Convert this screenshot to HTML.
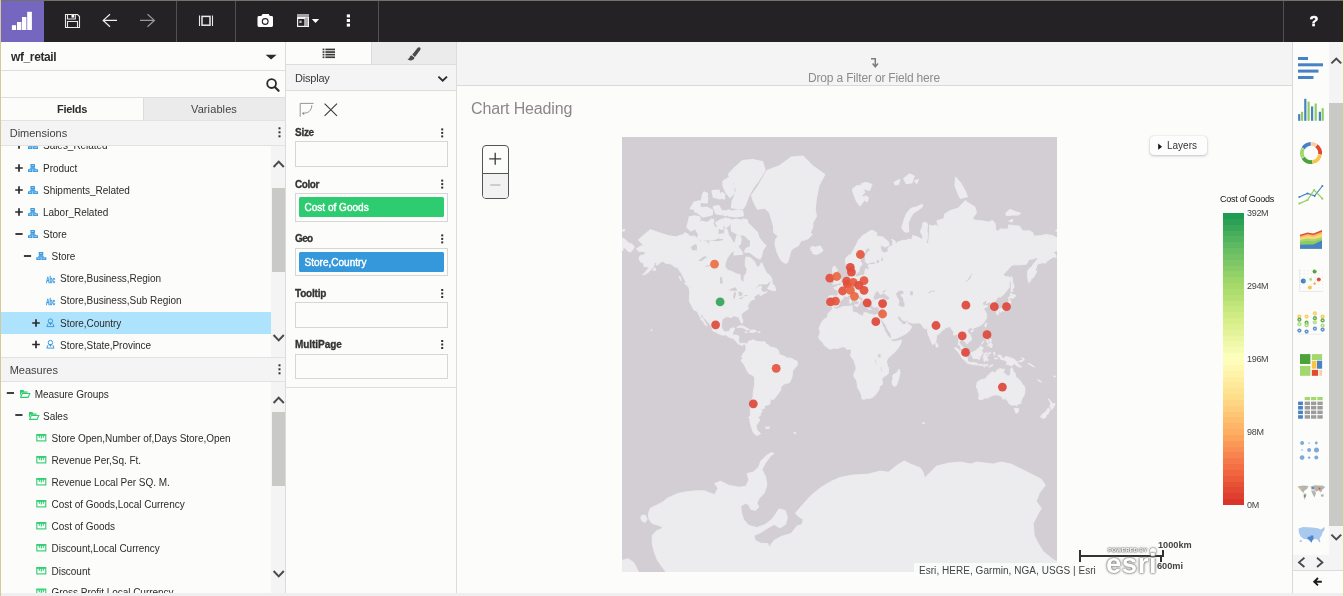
<!DOCTYPE html>
<html>
<head>
<meta charset="utf-8">
<title>wf_retail</title>
<style>
*{box-sizing:border-box;margin:0;padding:0}
html,body{width:1344px;height:596px;overflow:hidden;background:#fcfdfb;font-family:"Liberation Sans",sans-serif;font-size:10.5px;color:#2b2b2b}
.abs{position:absolute}
svg{position:absolute;overflow:visible}
#edgeL{left:0;top:0;width:1px;height:596px;background:#d9c79a}
#edgeR{left:1343px;top:0;width:1px;height:596px;background:#e2d5a9}
#edgeT{left:0;top:0;width:1344px;height:1px;background:#70756b}
#topbar{left:1px;top:1px;width:1342px;height:41px;background:#242225}
#logo{left:0;top:0;width:43px;height:41px;background:#7566c0}
.tdiv{top:0;width:1px;height:41px;background:#525053}
/* left panel */
#left{left:1px;top:42px;width:284px;height:552px;background:#fcfdfb;overflow:hidden}
.hline{left:0;height:1px;background:#dcdfdd}
.t{position:absolute;white-space:nowrap;font-size:10px;letter-spacing:-0.03px;line-height:14px;height:14px}
.row{position:absolute;left:0;width:269px;height:22px}
.row .t{top:4px}
.sechead{position:absolute;left:0;width:284px;height:25px;background:#f4f4f4;border-top:1px solid #e2e2e2;border-bottom:1px solid #e2e2e2}
.sechead span{position:absolute;left:8.7px;top:5px;font-size:11px;color:#424242;letter-spacing:0;line-height:14px}
.vbar{position:absolute;width:15px;background:#f4f4f4}
.thumb{position:absolute;left:1px;width:13px;background:#c9c9c5}
/* middle panel */
#mid{left:285px;top:42px;width:172px;height:552px;background:#fcfdfb;border-left:1px solid #dcdcdc;border-right:1px solid #dcdcdc}
.bucketlbl{position:absolute;left:9px;font-weight:bold;font-size:10px;letter-spacing:-0.2px;color:#333;-webkit-text-stroke:0.3px #333;line-height:14px;height:14px}
.bucket{position:absolute;left:9px;width:153px;height:26px;border:1px solid #d6d6d6;background:#fcfdfb}
.pill{position:absolute;left:3px;top:3px;width:145px;height:20px;color:#fff;font-size:10px;letter-spacing:0.02px;line-height:22px;padding-left:5.5px;-webkit-text-stroke:0.4px #fff;border-radius:1.5px;white-space:nowrap}
/* canvas */
#canvas{left:457px;top:42px;width:835px;height:552px;background:#fcfdfb}
#filter{left:0;top:0;width:835px;height:44px;background:#f4f4f4;border-bottom:1px solid #d9d9d9}
/* right strip */
#strip{left:1292px;top:42px;width:51px;height:552px;background:#fcfdfb;border-left:1px solid #d9d9d9}
#bottom{left:1px;top:593px;width:1342px;height:3px;background:#efefef}
</style>
</head>
<body>
<div id="all" style="position:absolute;left:0;top:0;width:1344px;height:596px;will-change:transform">
<div class="abs" id="topbar">
  <div class="abs" id="logo"></div>
  <svg style="left:0;top:0" width="43" height="41" viewBox="1 1 43 41">
    <rect x="11.9" y="25.2" width="4.2" height="4.8" fill="#fff"/>
    <rect x="17" y="22" width="4.4" height="8" fill="#fff"/>
    <rect x="22" y="17" width="4.4" height="13" fill="#fff"/>
    <rect x="27.2" y="11.8" width="4.7" height="18.2" fill="#fff"/>
  </svg>
  <div class="abs tdiv" style="left:175px"></div>
  <div class="abs tdiv" style="left:234px"></div>
  <div class="abs tdiv" style="left:377px"></div>
  <div class="abs tdiv" style="left:1282px"></div>
  <!-- all toolbar icons drawn in page coordinates -->
  <svg style="left:0;top:0" width="1342" height="41" viewBox="1 1 1342 41" fill="none" stroke-linecap="butt">
    <!-- save -->
    <g stroke="#e9e9e9" stroke-width="1.1">
      <path d="M65.5 14.5H77.5L79.5 16.5V27.5H65.5Z"/>
      <path d="M67.5 14.5V19H75.3V14.5"/>
      <path d="M67.5 27.5V21.5H77.5V27.5"/>
    </g>
    <rect x="71.5" y="15" width="2.6" height="2.6" fill="#fff"/>
    <!-- back arrow -->
    <path d="M117 20.4H103.4M110 14.2L103.2 20.4L110 26.8" stroke="#f0f0f0" stroke-width="1.2"/>
    <!-- forward arrow -->
    <path d="M140 20.4H154.2M147.5 14.2L154.4 20.4L147.5 26.8" stroke="#9b999b" stroke-width="1.2"/>
    <!-- fit icon -->
    <path d="M199.5 15.6V26M212.5 15.6V26" stroke="#e9e9e9" stroke-width="1.1"/>
    <rect x="202" y="16.4" width="8" height="8.8" stroke="#e9e9e9" stroke-width="1.5"/>
    <!-- camera -->
    <path d="M259 16H261.3L262.6 14.1H268.6L269.9 16H271.6Q273 16 273 17.4V25.6Q273 27 271.6 27H258.9Q257.5 27 257.5 25.6V17.4Q257.5 16 259 16Z" fill="#fff"/>
    <circle cx="265.2" cy="21.5" r="2.9" stroke="#242225" stroke-width="1.1" fill="#fff"/>
    <!-- layout icon -->
    <rect x="297" y="14" width="12" height="13" fill="#f2f2f2"/>
    <rect x="297" y="14" width="12" height="3" fill="#a3a3a3"/>
    <rect x="298.2" y="19" width="6.2" height="6.8" fill="#242225"/>
    <rect x="299.4" y="20.6" width="2.2" height="2.4" fill="#bdbdbd"/>
    <rect x="305.1" y="17.6" width="2.8" height="8.4" fill="#a9a9a9"/>
    <path d="M311.8 19H319.2L315.5 23Z" fill="#fff"/>
    <!-- more dots -->
    <rect x="346.8" y="14.4" width="3.2" height="3" fill="#fff"/>
    <rect x="346.8" y="19" width="3.2" height="3" fill="#fff"/>
    <rect x="346.8" y="23.6" width="3.2" height="3" fill="#fff"/>
  </svg>
  <div class="abs" style="left:1307px;top:12px;width:12px;height:16px;color:#fff;font-weight:bold;font-size:14.5px;line-height:16px;text-align:center;-webkit-text-stroke:0.5px #fff">?</div>

</div>

<div class="abs" id="left">
<div class="t" style="left:10px;top:8px;font-weight:bold;font-size:12px;letter-spacing:-0.38px;color:#2b2b2b">wf_retail</div>
<svg style="left:0;top:0" width="284" height="60" viewBox="1 42 284 60"><path d="M265.6 54.8H276.6L271.1 59.5Z" fill="#2b2b2b"/><circle cx="271.6" cy="83.6" r="4.4" fill="none" stroke="#2b2b2b" stroke-width="1.8"/><path d="M274.8 87L278.6 90.8" stroke="#2b2b2b" stroke-width="2.2" stroke-linecap="round"/></svg>
<div class="abs hline" style="top:28px;width:284px"></div>
<div class="abs hline" style="top:55px;width:284px"></div>
<div class="abs" style="left:142px;top:56px;width:142px;height:22px;background:#ebebeb;border-left:1px solid #dcdcdc"></div>
<div class="t" style="left:0;width:142px;text-align:center;top:60px;font-weight:bold;font-size:11px;letter-spacing:-0.3px">Fields</div>
<div class="t" style="left:142px;width:142px;text-align:center;top:60px;font-size:11px;letter-spacing:0.1px;color:#444">Variables</div>
<div class="abs" style="left:0;top:104px;width:270px;height:211px;overflow:hidden"><div class="abs" style="left:0;top:-104px;width:270px;height:600px">
<div class="t" style="left:42.0px;top:97px">Sales_Related</div>
<div class="t" style="left:42.0px;top:120px">Product</div>
<div class="t" style="left:42.0px;top:142px">Shipments_Related</div>
<div class="t" style="left:42.0px;top:164px">Labor_Related</div>
<div class="t" style="left:42.0px;top:186px">Store</div>
<div class="t" style="left:50.5px;top:208px">Store</div>
<div class="t" style="left:59.0px;top:230px">Store,Business,Region</div>
<div class="t" style="left:59.0px;top:252px">Store,Business,Sub Region</div>
<div class="abs" style="left:0;top:270px;width:270px;height:22px;background:#ade3fd"></div>
<div class="t" style="left:59.0px;top:275px">Store,Country</div>
<div class="t" style="left:59.0px;top:297px">Store,State,Province</div>
<svg style="left:0;top:0" width="270" height="560"><path d="M14.2 103.0H21.8M18.0 99.3V106.7" stroke="#2b2b2b" stroke-width="1.7" fill="none"/><g fill="#3b9ae1"><rect x="29.4" y="99.1" width="4.6" height="2.8" rx="0.4"/><path d="M30.0 101.8h3.4l1.7 2.6h-6.8z" fill-opacity="0.85"/><rect x="27.0" y="104.2" width="4.5" height="2.9" rx="0.3"/><rect x="32.1" y="104.2" width="4.9" height="2.9" rx="0.3"/></g><g fill="#a9d6f7"><rect x="30.6" y="100.0" width="2.2" height="0.9"/><rect x="28.2" y="105.2" width="2" height="0.9"/><rect x="33.4" y="105.2" width="2.4" height="0.9"/></g><path d="M14.2 126.0H21.8M18.0 122.3V129.7" stroke="#2b2b2b" stroke-width="1.7" fill="none"/><g fill="#3b9ae1"><rect x="29.4" y="122.1" width="4.6" height="2.8" rx="0.4"/><path d="M30.0 124.8h3.4l1.7 2.6h-6.8z" fill-opacity="0.85"/><rect x="27.0" y="127.2" width="4.5" height="2.9" rx="0.3"/><rect x="32.1" y="127.2" width="4.9" height="2.9" rx="0.3"/></g><g fill="#a9d6f7"><rect x="30.6" y="123.0" width="2.2" height="0.9"/><rect x="28.2" y="128.2" width="2" height="0.9"/><rect x="33.4" y="128.2" width="2.4" height="0.9"/></g><path d="M14.2 148.0H21.8M18.0 144.3V151.7" stroke="#2b2b2b" stroke-width="1.7" fill="none"/><g fill="#3b9ae1"><rect x="29.4" y="144.1" width="4.6" height="2.8" rx="0.4"/><path d="M30.0 146.8h3.4l1.7 2.6h-6.8z" fill-opacity="0.85"/><rect x="27.0" y="149.2" width="4.5" height="2.9" rx="0.3"/><rect x="32.1" y="149.2" width="4.9" height="2.9" rx="0.3"/></g><g fill="#a9d6f7"><rect x="30.6" y="145.0" width="2.2" height="0.9"/><rect x="28.2" y="150.2" width="2" height="0.9"/><rect x="33.4" y="150.2" width="2.4" height="0.9"/></g><path d="M14.2 170.0H21.8M18.0 166.3V173.7" stroke="#2b2b2b" stroke-width="1.7" fill="none"/><g fill="#3b9ae1"><rect x="29.4" y="166.1" width="4.6" height="2.8" rx="0.4"/><path d="M30.0 168.8h3.4l1.7 2.6h-6.8z" fill-opacity="0.85"/><rect x="27.0" y="171.2" width="4.5" height="2.9" rx="0.3"/><rect x="32.1" y="171.2" width="4.9" height="2.9" rx="0.3"/></g><g fill="#a9d6f7"><rect x="30.6" y="167.0" width="2.2" height="0.9"/><rect x="28.2" y="172.2" width="2" height="0.9"/><rect x="33.4" y="172.2" width="2.4" height="0.9"/></g><path d="M14.4 192.0H21.6" stroke="#2b2b2b" stroke-width="1.8" fill="none"/><g fill="#3b9ae1"><rect x="29.4" y="188.1" width="4.6" height="2.8" rx="0.4"/><path d="M30.0 190.8h3.4l1.7 2.6h-6.8z" fill-opacity="0.85"/><rect x="27.0" y="193.2" width="4.5" height="2.9" rx="0.3"/><rect x="32.1" y="193.2" width="4.9" height="2.9" rx="0.3"/></g><g fill="#a9d6f7"><rect x="30.6" y="189.0" width="2.2" height="0.9"/><rect x="28.2" y="194.2" width="2" height="0.9"/><rect x="33.4" y="194.2" width="2.4" height="0.9"/></g><path d="M22.9 214.0H30.1" stroke="#2b2b2b" stroke-width="1.8" fill="none"/><g fill="#3b9ae1"><rect x="37.7" y="210.1" width="4.6" height="2.8" rx="0.4"/><path d="M38.3 212.8h3.4l1.7 2.6h-6.8z" fill-opacity="0.85"/><rect x="35.3" y="215.2" width="4.5" height="2.9" rx="0.3"/><rect x="40.4" y="215.2" width="4.9" height="2.9" rx="0.3"/></g><g fill="#a9d6f7"><rect x="38.9" y="211.0" width="2.2" height="0.9"/><rect x="36.5" y="216.2" width="2" height="0.9"/><rect x="41.7" y="216.2" width="2.4" height="0.9"/></g><text x="45.0" y="241.0" font-size="9.6" font-weight="bold" fill="#3b9ae1" stroke="#3b9ae1" stroke-width="0.35" textLength="9.2" lengthAdjust="spacingAndGlyphs" font-family="Liberation Sans, sans-serif">Abc</text><text x="45.0" y="263.0" font-size="9.6" font-weight="bold" fill="#3b9ae1" stroke="#3b9ae1" stroke-width="0.35" textLength="9.2" lengthAdjust="spacingAndGlyphs" font-family="Liberation Sans, sans-serif">Abc</text><path d="M31.2 281.0H38.8M35.0 277.3V284.7" stroke="#2b2b2b" stroke-width="1.7" fill="none"/><circle cx="49.4" cy="279.1" r="2.2" fill="none" stroke="#3b9ae1" stroke-width="1"/><path d="M47.5 280.4L49.4 283.4L51.3 280.4" fill="#3b9ae1"/><path d="M47.0 281.6L45.8 284.6H53.0L51.8 281.6" fill="none" stroke="#3b9ae1" stroke-width="1"/><path d="M31.2 302.5H38.8M35.0 298.8V306.2" stroke="#2b2b2b" stroke-width="1.7" fill="none"/><circle cx="49.4" cy="300.6" r="2.2" fill="none" stroke="#3b9ae1" stroke-width="1"/><path d="M47.5 301.9L49.4 304.9L51.3 301.9" fill="#3b9ae1"/><path d="M47.0 303.1L45.8 306.1H53.0L51.8 303.1" fill="none" stroke="#3b9ae1" stroke-width="1"/></svg>
</div></div>
<div class="abs" style="left:0;top:340px;width:270px;height:212px;overflow:hidden"><div class="abs" style="left:0;top:-340px;width:270px;height:600px">
<div class="t" style="left:33.7px;top:346px">Measure Groups</div>
<div class="t" style="left:42.0px;top:368px">Sales</div>
<div class="t" style="left:50.5px;top:390px">Store Open,Number of,Days Store,Open</div>
<div class="t" style="left:50.5px;top:412px">Revenue Per,Sq. Ft.</div>
<div class="t" style="left:50.5px;top:434px">Revenue Local Per SQ. M.</div>
<div class="t" style="left:50.5px;top:456px">Cost of Goods,Local Currency</div>
<div class="t" style="left:50.5px;top:478px">Cost of Goods</div>
<div class="t" style="left:50.5px;top:500px">Discount,Local Currency</div>
<div class="t" style="left:50.5px;top:523px">Discount</div>
<div class="t" style="left:50.5px;top:544px">Gross Profit,Local Currency</div>
<svg style="left:0;top:0" width="270" height="560"><path d="M5.8 351.0H13.0" stroke="#2b2b2b" stroke-width="1.8" fill="none"/><path d="M19.0 348.1h3.4l1 1.3h3.2v1.4h-6.2l-1.4 3.6z" fill="#2ecc71"/><path d="M21.2 351.5h7.6l-1.7 3.9h-7.4z" fill="none" stroke="#2ecc71" stroke-width="1.1"/><path d="M14.3 373.0H21.5" stroke="#2b2b2b" stroke-width="1.8" fill="none"/><path d="M28.0 370.1h3.4l1 1.3h3.2v1.4h-6.2l-1.4 3.6z" fill="#2ecc71"/><path d="M30.2 373.5h7.6l-1.7 3.9h-7.4z" fill="none" stroke="#2ecc71" stroke-width="1.1"/><rect x="35.8" y="392.6" width="9" height="6.3" fill="none" stroke="#2ecc71" stroke-width="1.1"/><path d="M35.8 393.3h9M38.3 393.1v2.6M40.3 393.1v3.4M42.3 393.1v2.6" stroke="#2ecc71" stroke-width="1.1" fill="none"/><rect x="35.8" y="414.6" width="9" height="6.3" fill="none" stroke="#2ecc71" stroke-width="1.1"/><path d="M35.8 415.3h9M38.3 415.1v2.6M40.3 415.1v3.4M42.3 415.1v2.6" stroke="#2ecc71" stroke-width="1.1" fill="none"/><rect x="35.8" y="436.6" width="9" height="6.3" fill="none" stroke="#2ecc71" stroke-width="1.1"/><path d="M35.8 437.3h9M38.3 437.1v2.6M40.3 437.1v3.4M42.3 437.1v2.6" stroke="#2ecc71" stroke-width="1.1" fill="none"/><rect x="35.8" y="458.6" width="9" height="6.3" fill="none" stroke="#2ecc71" stroke-width="1.1"/><path d="M35.8 459.3h9M38.3 459.1v2.6M40.3 459.1v3.4M42.3 459.1v2.6" stroke="#2ecc71" stroke-width="1.1" fill="none"/><rect x="35.8" y="480.6" width="9" height="6.3" fill="none" stroke="#2ecc71" stroke-width="1.1"/><path d="M35.8 481.3h9M38.3 481.1v2.6M40.3 481.1v3.4M42.3 481.1v2.6" stroke="#2ecc71" stroke-width="1.1" fill="none"/><rect x="35.8" y="502.6" width="9" height="6.3" fill="none" stroke="#2ecc71" stroke-width="1.1"/><path d="M35.8 503.3h9M38.3 503.1v2.6M40.3 503.1v3.4M42.3 503.1v2.6" stroke="#2ecc71" stroke-width="1.1" fill="none"/><rect x="35.8" y="525.6" width="9" height="6.3" fill="none" stroke="#2ecc71" stroke-width="1.1"/><path d="M35.8 526.3h9M38.3 526.1v2.6M40.3 526.1v3.4M42.3 526.1v2.6" stroke="#2ecc71" stroke-width="1.1" fill="none"/><rect x="35.8" y="547.1" width="9" height="6.3" fill="none" stroke="#2ecc71" stroke-width="1.1"/><path d="M35.8 547.8h9M38.3 547.6v2.6M40.3 547.6v3.4M42.3 547.6v2.6" stroke="#2ecc71" stroke-width="1.1" fill="none"/></svg>
</div></div>
<div class="sechead" style="top:78px;height:26px"><span>Dimensions</span><svg style="left:276.6px;top:6px" width="3" height="11"><rect x="0.5" y="0.3" width="2" height="2" fill="#333"/><rect x="0.5" y="4.3" width="2" height="2" fill="#333"/><rect x="0.5" y="8.3" width="2" height="2" fill="#333"/></svg></div>
<div class="sechead" style="top:315px"><span>Measures</span><svg style="left:276.6px;top:6px" width="3" height="11"><rect x="0.5" y="0.3" width="2" height="2" fill="#333"/><rect x="0.5" y="4.3" width="2" height="2" fill="#333"/><rect x="0.5" y="8.3" width="2" height="2" fill="#333"/></svg></div>
<div class="vbar" style="left:270px;top:104px;height:211px"><div class="thumb" style="top:42px;height:84px"></div><svg style="left:0;top:0" width="15" height="211"><path d="M2.6 21.0L7.7 15.6L12.8 21.0" fill="none" stroke="#4a4a4a" stroke-width="2"/><path d="M2.6 189.0L7.7 194.4L12.8 189.0" fill="none" stroke="#4a4a4a" stroke-width="2"/></svg></div>
<div class="vbar" style="left:270px;top:340px;height:212px"><div class="thumb" style="top:30px;height:74px"></div><svg style="left:0;top:0" width="15" height="212"><path d="M2.6 21.0L7.7 15.6L12.8 21.0" fill="none" stroke="#4a4a4a" stroke-width="2"/><path d="M2.6 189.0L7.7 194.4L12.8 189.0" fill="none" stroke="#4a4a4a" stroke-width="2"/></svg></div>

</div>

<div class="abs" id="mid">
  <!-- coords: abs - (286,42) inside border box (border-left 1px at x=285) -->
  <div class="abs" style="left:85px;top:0;width:85px;height:22px;background:#ebebeb;border-left:1px solid #dcdcdc"></div>
  <div class="abs hline" style="top:22px;width:170px;background:#dcdcdc"></div>
  <div class="abs" style="left:0;top:23px;width:170px;height:25px;background:#f4f4f4"></div>
  <div class="abs hline" style="top:48px;width:170px;background:#dcdcdc"></div>
  <div class="t" style="left:9px;top:29px;font-size:11px;letter-spacing:-0.2px;color:#3a3a3a">Display</div>
  <svg style="left:0;top:0" width="170" height="552" viewBox="286 42 170 552" fill="none">
    <!-- list icon -->
    <g fill="#3a3a3a">
      <rect x="322.6" y="48.6" width="1.8" height="1.7"/><rect x="325.4" y="48.6" width="9.6" height="1.7"/>
      <rect x="322.6" y="51.2" width="1.8" height="1.7"/><rect x="325.4" y="51.2" width="9.6" height="1.7"/>
      <rect x="322.6" y="53.8" width="1.8" height="1.7"/><rect x="325.4" y="53.8" width="9.6" height="1.7"/>
      <rect x="322.6" y="56.4" width="1.8" height="1.7"/><rect x="325.4" y="56.4" width="9.6" height="1.7"/>
    </g>
    <!-- brush -->
    <path d="M419.4 47.3C420.7 47.7 420.9 49.1 420.2 50.1L415 57L412.2 54.8L417.5 47.9C417.9 47.3 418.7 47.1 419.4 47.3Z" fill="#4a4a4a"/>
    <path d="M411.6 55.4L414.4 57.6C414.4 59.4 412.6 60.6 410.6 60.4C409.2 60.3 408 59.7 407.5 58.9C409.2 58.8 409.5 57.9 409.7 57C409.9 56 410.7 55.4 411.6 55.4Z" fill="#4a4a4a"/>
    <!-- chevron down -->
    <path d="M438.4 76.6L442.7 80.6L447 76.6" stroke="#2b2b2b" stroke-width="1.9"/>
    <!-- swap icon -->
    <path d="M300.2 116.8V103.4H313.6" stroke="#8a8a8a" stroke-width="0.9"/>
    <path d="M311.8 105.2C311.6 110.6 308.6 113.2 302.6 113.4M302.4 113.4L304.4 112.2M302.4 113.4L304.2 114.8" stroke="#8a8a8a" stroke-width="0.9"/>
    <!-- X icon -->
    <path d="M324.6 103.6L337 115.8M337 103.6L324.6 115.8" stroke="#3a3a3a" stroke-width="1.1"/>
  </svg>
  <div class="bucketlbl" style="top:84px;letter-spacing:-0.28px">Size</div>
  <div class="bucket" style="top:99px"></div>
  <div class="bucketlbl" style="top:136px;letter-spacing:-0.46px">Color</div>
  <div class="bucket" style="top:151px;height:29px"><div class="pill" style="background:#2ecc71">Cost of Goods</div></div>
  <div class="bucketlbl" style="top:190px;letter-spacing:-0.65px">Geo</div>
  <div class="bucket" style="top:206px;height:28px"><div class="pill" style="background:#3498db">Store,Country</div></div>
  <div class="bucketlbl" style="top:245px;letter-spacing:-0.21px">Tooltip</div>
  <div class="bucket" style="top:260px"></div>
  <div class="bucketlbl" style="top:296px;letter-spacing:-0.06px">MultiPage</div>
  <div class="bucket" style="top:312px;height:25px"></div>
  <div class="abs hline" style="top:345px;width:170px;background:#dcdcdc"></div>
  <svg style="left:0;top:0" width="170" height="400" viewBox="286 42 170 400">
    <g fill="#333">
      <rect x="441.2" y="128.4" width="2" height="2"/><rect x="441.2" y="131.9" width="2" height="2"/><rect x="441.2" y="135.4" width="2" height="2"/>
      <rect x="441.2" y="179.6" width="2" height="2"/><rect x="441.2" y="183.1" width="2" height="2"/><rect x="441.2" y="186.6" width="2" height="2"/>
      <rect x="441.2" y="234.4" width="2" height="2"/><rect x="441.2" y="237.9" width="2" height="2"/><rect x="441.2" y="241.4" width="2" height="2"/>
      <rect x="441.2" y="289" width="2" height="2"/><rect x="441.2" y="292.5" width="2" height="2"/><rect x="441.2" y="296" width="2" height="2"/>
      <rect x="441.2" y="340" width="2" height="2"/><rect x="441.2" y="343.5" width="2" height="2"/><rect x="441.2" y="347" width="2" height="2"/>
    </g>
  </svg>

</div>

<div class="abs" id="canvas">
<div class="abs" id="filter"></div>
<svg style="left:0;top:0" width="835" height="44" viewBox="457 42 835 44"><path d="M871 58.8H875.3V65.6M872.6 63.6L875.3 66.8L878 63.6" fill="none" stroke="#7d7d7d" stroke-width="1.5"/></svg>
<div class="t" style="left:347px;top:29px;width:140px;text-align:center;font-size:12px;letter-spacing:-0.18px;color:#8c8c8c;line-height:14px">Drop a Filter or Field here</div>
<div class="t" style="left:14px;top:57px;font-size:16px;letter-spacing:-0.15px;color:#8c858c;line-height:20px;height:20px">Chart Heading</div>
<div class="abs" style="left:25px;top:103px;width:27px;height:54px;border:1px solid #515757;border-radius:4px;background:#fcfdfb;overflow:hidden"><div class="abs" style="left:0;top:27px;width:25px;height:25px;background:#f2f2f2;border-top:1px solid #515757"></div></div>
<svg style="left:0;top:0" width="100" height="200" viewBox="457 42 100 200"><path d="M489.2 158.8H501.2M495.2 152.8V164.8" stroke="#3a3a3a" stroke-width="1.3" fill="none"/><path d="M490.2 185H500.4" stroke="#b9b9b9" stroke-width="1.3"/></svg>
<svg style="left:165px;top:95px;overflow:hidden" width="435" height="435" viewBox="0 0 435 435"><rect width="435" height="435" fill="#d3ced4"/><path fill="#ecebed" stroke="#ecebed" stroke-width="0.9" stroke-linejoin="round" d="M14.5,111.5L19.3,108.8L21.8,109.7L19.9,106.6L16.3,103.1L20.5,99.1L28.4,92.6L33.8,94.5L38.7,96.3L47.1,98.8L54.4,99.8L56.8,98.8L61.6,97.4L62.8,95.6L66.5,97.4L67.7,99.4L72.5,99.1L78.5,104.7L84.6,104.4L87.0,107.9L87.6,104.1L94.2,104.7L99.1,104.1L101.5,103.1L101.5,99.1L103.3,90.3L105.7,93.7L106.3,97.4L108.8,100.8L111.2,105.7L113.0,105.7L114.8,98.1L118.4,99.1L119.3,102.5L118.4,107.3L116.0,109.4L113.6,110.3L113.0,108.8L112.4,113.2L108.8,116.0L105.1,121.3L103.3,126.3L103.0,129.4L105.7,133.3L110.0,134.4L114.8,137.0L118.1,137.6L118.4,141.7L120.2,145.1L122.0,144.7L122.0,139.7L124.5,135.5L125.1,132.1L123.2,128.7L123.2,123.9L123.9,120.0L128.1,120.6L131.7,123.9L133.5,126.3L134.1,129.2L136.5,130.3L138.4,127.5L139.6,125.6L142.6,132.1L145.0,136.5L148.0,138.6L149.8,141.7L150.2,143.7L146.8,145.1L145.0,147.0L140.2,147.0L137.1,147.2L134.7,149.4L132.3,152.5L135.3,150.3L139.0,149.0L139.8,149.8L139.0,151.6L139.2,153.9L140.8,154.9L143.2,155.4L145.0,154.2L144.6,155.3L140.8,157.2L138.4,158.8L137.5,157.8L139.6,156.0L136.5,156.8L134.1,158.2L132.3,159.3L132.1,161.2L132.9,161.8L131.1,162.5L128.1,163.7L127.8,165.5L126.3,167.0L125.7,169.3L126.3,171.9L124.5,173.0L122.0,174.8L119.6,176.7L119.3,178.8L120.2,182.2L120.8,183.9L120.4,186.0L119.4,186.0L118.4,184.3L117.5,182.2L116.6,179.5L114.8,179.9L113.0,178.9L111.2,179.1L109.4,180.6L108.1,180.6L106.9,180.0L104.5,179.7L102.7,180.6L100.3,182.2L99.9,184.9L99.3,189.6L101.1,193.7L103.3,195.0L106.3,194.5L107.9,193.5L108.3,191.5L111.2,190.9L112.6,191.1L111.8,193.5L110.8,195.4L110.6,197.9L110.3,198.2L113.6,198.0L117.0,199.2L116.6,202.3L116.4,204.1L117.2,205.4L118.4,206.6L120.8,206.3L122.0,206.0L123.9,206.9L124.1,207.8L122.6,207.2L121.4,206.8L120.5,208.7L119.0,208.0L117.2,207.4L114.8,205.4L113.8,204.1L111.8,201.7L108.8,200.8L106.3,199.8L103.9,197.7L100.9,198.3L96.9,196.9L94.2,195.4L90.6,193.5L90.0,192.2L90.3,190.9L88.8,188.5L87.0,186.3L85.2,184.0L84.0,182.4L81.9,180.9L81.0,178.1L78.9,177.1L78.9,179.5L81.0,181.5L82.2,183.6L83.4,185.6L84.2,187.3L85.2,188.7L84.3,188.9L82.2,186.6L81.9,184.9L79.8,183.3L78.5,182.5L79.4,181.1L77.6,179.2L76.1,175.9L74.3,173.8L71.9,173.0L70.2,169.9L69.5,168.1L67.9,165.5L67.3,164.0L67.4,161.5L67.7,157.3L67.7,154.2L66.8,150.5L68.9,150.9L69.5,152.1L69.5,149.8L68.6,149.0L67.1,147.5L64.0,145.6L62.8,142.7L60.4,138.6L59.8,136.5L58.0,134.4L55.6,130.6L52.6,129.9L50.8,128.2L48.3,126.8L43.5,126.3L41.1,124.4L38.7,125.1L36.2,127.5L34.1,128.2L35.0,123.9L32.6,126.3L31.4,129.9L28.4,133.3L26.0,135.5L23.0,137.2L20.5,138.0L23.0,135.5L26.0,132.1L27.2,129.4L25.4,129.9L21.8,129.4L21.8,126.3L18.7,125.1L16.9,122.1L18.1,118.7L20.5,118.2L23.0,117.4L23.0,114.6L20.5,114.6L16.3,114.3ZM129.3,58.6L136.5,48.1L145.0,33.3L157.1,28.8L169.2,20.0L181.2,18.9L190.9,28.8L203.0,37.5L197.0,48.8L194.5,61.5L193.3,72.3L194.5,79.4L190.9,85.9L190.9,89.9L188.5,95.6L190.3,97.4L186.1,101.8L178.8,104.1L176.4,108.8L171.6,111.2L169.2,113.2L168.0,117.4L165.5,125.8L163.1,126.3L159.5,123.9L157.1,120.0L155.3,116.0L154.1,111.8L152.9,107.3L153.5,102.5L155.9,99.1L151.6,95.6L151.6,89.9L149.8,83.8L147.4,75.7L142.6,71.3L135.3,72.3L131.7,65.5ZM143.2,108.8L140.2,113.2L139.0,118.7L137.8,121.3L134.7,120.0L130.5,116.6L127.5,114.6L123.2,114.6L124.5,111.8L128.7,110.3L129.3,103.5L125.7,100.8L122.6,97.4L118.4,97.4L113.6,95.6L110.0,93.7L109.4,83.8L114.8,82.5L119.6,83.8L123.2,86.7L126.9,87.9L131.7,92.6L135.3,96.3L136.5,100.8L140.2,105.7ZM95.5,100.8L90.6,102.5L84.6,102.1L79.8,103.1L76.1,100.8L77.3,97.4L74.9,93.7L73.7,91.5L76.1,86.7L79.8,84.7L84.6,85.9L89.4,83.8L91.8,89.9L95.5,91.9L95.5,97.4ZM65.5,89.9L68.9,93.4L71.3,92.2L73.1,87.9L76.1,84.2L77.9,82.5L77.3,80.3L72.5,79.4L67.7,80.3L67.1,83.8ZM110.0,70.3L120.8,71.3L123.2,67.1L126.3,58.6L130.5,50.9L136.5,43.0L142.6,33.3L140.2,25.0L130.5,23.1L120.8,24.0L112.4,31.6L106.9,37.5L112.4,45.3L114.8,53.5L112.4,60.4L110.6,64.4ZM101.5,44.5L107.5,40.7L111.2,48.8L111.8,55.5L108.1,59.8L104.5,55.5L101.5,48.8ZM120.8,78.5L113.6,79.4L106.9,78.5L106.3,73.3L110.0,74.8L116.0,73.3L120.2,74.3ZM108.1,82.5L102.7,81.6L102.1,85.9L103.9,89.9L106.9,87.9ZM100.3,82.5L94.2,85.9L96.7,90.7L100.3,91.9L100.9,86.7ZM90.0,73.3L84.6,70.8L76.1,71.3L76.1,75.7L81.0,79.4L87.0,78.1L90.0,77.1ZM99.7,74.8L96.7,69.2L91.8,69.8L94.2,76.2L99.1,77.1ZM77.9,72.3L68.9,71.3L72.5,65.5L77.3,64.4ZM97.9,61.5L91.8,59.8L90.6,54.2L96.7,53.5ZM120.2,116.6L112.4,117.4L113.0,111.8L116.0,110.3L119.0,114.6ZM102.1,100.8L97.9,100.8L97.3,98.1L100.9,97.4ZM145.8,151.9L150.1,153.4L153.5,153.7L153.8,151.9L152.9,150.3L152.9,148.8L150.4,147.5L150.4,144.7L148.6,145.6L147.4,148.5L145.8,150.7ZM68.3,150.5L66.5,149.9L62.5,146.2L64.0,146.0L66.5,147.5L68.3,149.6ZM59.2,143.7L56.8,139.7L58.2,139.7L58.6,141.7ZM33.8,133.3L30.8,133.3L32.6,130.3ZM114.8,190.4L117.8,188.9L120.8,188.9L124.5,190.9L127.8,192.6L123.9,193.0L122.6,191.5L119.0,190.2L116.0,190.5ZM127.6,194.6L129.3,193.0L132.9,193.1L134.8,194.6L132.3,195.0L130.9,195.6L127.6,195.1ZM122.9,194.9L125.3,195.1L125.1,195.6L123.0,195.5ZM136.3,194.7L138.2,194.9L138.0,195.5L136.3,195.4ZM188.1,111.8L190.3,109.1L193.3,110.3L198.2,108.8L200.0,111.8L201.1,113.2L199.4,115.2L194.5,117.6L190.3,116.6L191.2,114.3L188.5,113.5L190.9,112.3ZM123.9,207.2L125.7,206.2L126.3,204.7L127.1,204.0L129.3,203.5L130.9,202.4L131.3,204.1L132.9,203.5L132.7,202.8L134.7,204.5L137.8,204.6L140.2,205.1L142.6,204.5L143.8,206.0L144.0,207.2L146.2,207.8L148.0,209.9L151.0,210.4L154.7,211.6L155.9,212.7L157.1,215.3L157.1,217.5L158.9,218.1L160.1,218.3L163.7,219.9L164.3,220.9L167.4,221.0L170.4,221.7L172.4,223.3L174.8,223.9L175.4,226.2L175.2,228.4L172.8,230.9L171.0,233.3L170.4,235.8L170.1,239.4L169.2,242.2L168.0,244.8L166.8,246.1L163.7,246.3L161.3,247.7L158.9,249.8L158.8,252.8L157.1,255.5L154.7,258.6L152.9,261.2L151.0,262.6L148.0,262.0L146.9,261.2L148.4,264.2L147.8,267.2L142.6,268.8L142.2,271.6L139.0,271.9L140.2,274.3L138.6,276.0L138.4,278.5L135.9,280.2L138.0,282.9L135.7,286.5L134.1,288.4L134.8,291.9L135.0,292.9L138.7,296.8L136.5,297.8L134.1,298.5L132.3,296.6L130.7,294.5L129.8,291.3L128.6,287.5L127.8,283.8L128.1,281.6L126.6,281.1L128.3,278.5L129.3,273.5L128.1,275.7L128.3,273.2L128.7,269.5L128.6,266.0L129.9,263.4L131.1,259.8L131.1,255.5L132.3,249.4L132.6,246.1L132.7,242.2L132.4,240.0L130.5,238.3L126.9,236.5L125.3,234.3L124.2,232.1L122.3,227.8L121.0,225.7L119.4,224.8L119.3,222.9L120.8,221.5L120.5,220.5L119.6,220.2L119.9,218.7L120.8,217.5L120.8,216.5L122.3,215.7L122.6,214.5L124.1,212.9L123.9,210.2L124.1,209.0L123.4,208.8ZM143.8,289.9L147.7,290.1L146.8,291.7L143.8,291.5ZM210.4,171.1L211.1,171.0L215.1,172.2L217.5,171.1L221.1,169.5L226.0,169.3L229.6,168.9L230.8,169.3L229.9,170.1L230.6,173.0L229.6,174.1L231.4,174.9L233.2,175.4L236.0,176.2L236.2,177.4L238.6,178.2L240.5,179.1L241.7,178.1L241.7,175.9L244.1,175.4L245.9,176.4L247.7,177.1L250.7,177.8L252.5,178.2L254.4,177.4L256.5,177.6L256.8,179.6L258.0,182.5L259.2,184.9L260.4,187.6L260.6,188.9L262.2,191.5L262.6,194.1L264.0,195.4L265.2,198.5L267.0,199.8L269.1,201.9L269.8,203.4L270.7,204.7L273.1,204.4L276.7,203.8L279.4,203.0L279.1,204.9L278.3,207.2L276.7,210.2L275.5,212.1L273.1,214.7L270.1,217.5L267.6,219.7L266.1,221.1L265.2,222.9L264.4,225.4L265.2,226.0L265.0,227.8L265.6,229.6L266.4,230.3L266.6,235.2L266.4,236.5L264.6,238.1L262.2,239.4L261.0,240.8L259.7,241.9L260.4,244.8L260.4,247.4L257.4,249.4L257.3,251.4L256.6,253.7L255.0,255.5L253.8,257.4L251.9,259.5L250.1,260.6L248.6,261.2L244.7,261.4L241.7,262.4L239.9,261.7L239.6,259.4L239.5,257.9L238.0,254.8L237.4,253.6L235.6,250.7L235.0,246.1L235.0,244.8L233.7,242.2L231.8,239.6L231.8,237.7L232.4,235.8L233.8,232.7L234.2,230.9L233.4,228.4L232.4,224.8L231.8,222.9L230.2,221.1L228.4,218.7L228.7,216.9L229.3,216.0L229.1,214.5L229.3,213.3L228.3,212.1L226.0,212.2L224.8,212.3L223.5,210.8L222.7,209.9L220.5,209.9L218.7,210.4L216.3,211.3L215.1,211.7L213.3,211.3L211.5,211.3L208.4,212.2L206.6,211.5L204.4,209.6L202.4,208.4L201.4,206.6L199.7,204.4L199.4,204.1L198.2,202.9L197.2,202.3L197.2,201.0L196.4,199.5L197.6,197.9L198.2,195.4L197.8,193.7L197.0,191.5L198.2,188.3L199.6,185.6L200.1,184.5L201.8,182.6L204.2,181.1L205.4,180.2L205.8,178.8L205.7,177.4L206.4,175.9L208.4,174.4L209.9,172.6ZM277.1,232.1L278.2,236.5L277.7,237.1L277.3,239.6L276.1,243.5L274.5,248.4L272.1,249.4L270.7,248.0L269.8,244.8L271.0,242.2L270.7,239.0L271.9,237.1L274.3,236.2L275.5,234.6L276.5,232.7ZM206.6,169.3L206.0,166.7L206.9,163.1L206.3,159.8L207.8,158.7L210.9,158.8L213.3,159.0L215.3,159.2L216.1,157.2L216.2,154.8L214.8,152.8L212.1,151.6L211.7,150.5L213.9,149.8L215.6,150.1L215.3,148.1L216.1,148.6L217.7,148.5L219.3,147.3L219.4,145.8L221.4,144.9L222.3,143.7L223.2,141.9L224.1,141.1L226.0,140.9L227.4,140.5L227.9,139.7L228.3,138.8L227.5,137.6L227.3,136.3L227.3,133.9L227.9,133.0L230.2,131.7L229.9,133.7L230.6,134.8L229.6,137.0L229.1,138.0L229.6,138.8L230.8,139.7L232.0,139.3L233.8,138.8L234.8,139.9L237.2,139.1L239.9,138.2L241.3,138.8L241.7,137.8L242.9,137.0L242.9,133.7L243.6,132.1L244.8,131.7L245.5,133.3L246.7,133.0L247.0,130.3L245.9,129.2L245.9,128.2L247.7,127.5L251.3,127.5L254.0,126.6L252.3,125.1L250.1,125.1L247.7,125.8L245.2,126.6L243.2,124.6L243.4,121.6L243.1,119.3L244.7,116.8L247.1,113.8L248.2,112.9L247.1,110.9L244.3,111.5L243.2,114.6L242.3,116.8L239.9,119.0L238.4,121.3L238.3,124.6L240.1,126.3L240.1,127.8L238.0,129.4L237.4,132.1L236.8,135.0L235.0,135.5L234.7,136.7L233.1,136.7L232.7,135.2L232.6,133.5L231.8,131.7L231.0,128.7L230.4,126.8L229.3,128.7L227.8,130.6L226.0,131.0L224.4,129.2L223.5,125.6L223.5,121.9L224.8,119.8L227.8,117.4L230.1,117.4L229.6,115.5L231.4,113.2L233.2,109.7L235.0,106.3L236.2,103.5L238.6,100.8L240.5,98.4L243.5,97.0L245.9,95.2L248.7,93.4L251.3,93.7L255.0,95.9L253.8,98.4L257.4,99.4L261.0,100.1L266.4,104.7L267.3,108.2L263.4,110.0L258.0,107.9L259.6,114.6L262.8,116.0L266.4,114.3L265.8,110.9L268.6,109.1L270.7,108.8L270.7,104.1L269.8,102.1L273.1,104.1L273.7,107.9L275.5,105.1L281.5,103.1L283.4,103.5L287.0,102.1L290.0,102.5L290.6,98.4L295.4,99.8L297.2,100.8L298.5,101.5L300.9,102.5L300.3,98.4L298.2,94.5L300.3,89.9L300.9,85.9L303.9,85.1L305.5,87.1L305.1,93.7L305.7,99.1L304.5,105.7L306.3,107.3L306.9,102.5L307.5,93.7L307.5,87.9L309.9,89.1L311.8,88.7L314.2,87.9L317.2,91.9L314.8,83.8L322.0,81.6L322.6,77.1L328.7,73.3L335.9,71.3L343.5,63.3L345.6,65.5L352.8,69.8L354.6,75.7L350.4,81.6L352.8,83.0L355.2,83.4L360.1,83.8L366.7,85.1L370.4,83.4L373.4,86.7L373.4,91.9L375.8,94.5L378.2,91.9L383.0,92.2L386.1,91.9L386.7,87.9L392.7,88.7L397.5,89.1L399.4,92.2L401.8,94.1L407.2,93.7L410.8,95.6L412.0,99.1L416.3,98.8L419.9,98.4L423.5,97.4L430.2,98.4L435.0,100.8L438.6,102.8L441.0,105.7L445.3,107.3L447.4,110.0L446.5,111.8L444.1,114.6L443.5,115.2L440.4,113.8L439.2,111.8L436.2,110.3L436.2,113.2L435.0,113.5L433.2,114.3L431.7,115.2L433.8,118.2L434.2,120.3L431.4,120.0L428.4,121.9L425.3,123.9L423.3,126.3L420.5,125.6L418.1,126.6L416.3,126.6L414.8,128.7L414.5,131.0L413.2,131.7L414.7,135.0L413.2,137.6L410.8,141.3L409.0,141.7L408.7,143.7L406.8,145.6L406.0,142.7L405.4,137.6L405.8,133.7L407.2,131.5L409.6,129.9L412.0,126.3L415.1,122.6L415.7,120.0L411.4,121.9L407.2,122.4L404.2,127.3L400.0,127.5L396.9,128.0L392.7,127.8L389.7,128.2L387.3,131.0L384.2,134.4L380.9,138.0L383.4,139.3L384.0,140.3L386.1,139.3L388.2,141.1L388.1,143.3L387.3,145.6L387.3,150.3L384.9,153.4L381.8,157.3L378.4,160.2L376.9,159.7L375.4,161.0L374.2,162.3L374.2,163.4L371.6,165.0L372.8,167.0L373.9,169.3L373.9,171.6L373.1,172.2L371.6,172.7L370.1,173.0L370.4,171.1L370.7,169.3L369.8,168.1L368.5,167.0L368.9,165.5L367.8,164.7L364.3,166.6L364.9,163.7L363.7,163.3L361.9,165.0L360.1,165.9L361.1,167.5L361.3,168.9L363.5,168.1L365.5,168.7L365.5,169.5L362.9,170.8L361.7,172.3L362.9,173.5L363.6,175.5L364.8,177.1L364.8,178.2L363.1,179.1L364.9,179.6L364.4,181.8L363.1,183.6L362.0,185.6L360.3,187.0L358.5,188.5L355.6,189.7L354.6,190.0L352.6,190.8L351.0,191.3L350.8,192.4L350.2,191.0L348.4,190.8L346.6,191.8L345.3,193.9L346.2,195.8L348.2,197.8L349.4,200.7L349.6,202.9L348.0,204.4L346.8,204.9L346.4,205.7L344.4,207.1L344.1,205.4L342.6,204.6L341.4,202.9L339.5,202.0L339.4,201.2L338.3,201.3L338.3,203.5L337.4,205.0L337.5,206.3L338.7,207.4L339.1,208.8L340.4,209.4L341.4,210.2L342.3,211.7L342.6,213.9L343.4,215.8L342.6,215.9L341.1,214.8L339.9,213.9L338.8,211.0L338.6,209.6L337.9,208.7L336.3,208.0L336.3,206.0L336.8,204.1L336.6,202.3L335.9,200.0L335.4,197.3L333.9,197.2L332.7,198.2L331.4,197.9L331.7,195.4L330.8,193.5L329.0,191.5L328.4,189.7L326.9,189.8L325.0,190.5L322.6,190.9L322.4,192.2L320.4,193.3L319.0,194.7L316.9,196.9L315.4,198.0L314.4,198.8L314.4,201.4L313.9,203.5L313.9,205.0L313.0,206.2L312.0,206.7L311.1,207.7L309.9,206.6L309.3,204.7L308.1,202.3L307.3,199.8L306.3,197.9L305.7,195.4L305.5,194.1L305.3,191.5L305.2,190.0L304.6,191.3L303.1,191.9L300.6,189.8L300.9,188.7L299.9,188.0L298.8,187.3L298.1,186.6L297.9,185.8L295.4,186.0L291.8,186.2L288.8,185.8L286.6,185.2L286.1,183.6L285.4,183.5L283.4,184.1L281.5,183.6L279.7,182.4L278.9,181.0L278.2,179.5L276.7,178.9L276.1,179.6L275.5,180.2L276.1,181.5L276.7,182.9L277.9,184.0L278.2,185.3L278.9,186.6L279.4,184.8L279.8,186.0L279.7,187.2L280.9,187.5L282.8,187.5L284.3,185.9L285.4,184.7L285.7,186.4L286.4,187.6L288.3,188.1L289.8,189.6L288.4,192.2L287.3,194.1L286.4,194.4L285.5,195.5L284.0,196.7L280.6,198.4L276.7,200.4L274.3,201.3L271.9,201.9L270.1,202.0L269.7,201.3L269.2,199.2L268.9,197.3L267.3,194.7L265.8,192.8L264.9,190.9L264.0,188.3L262.4,186.3L261.0,184.3L259.8,182.1L259.7,180.2L258.9,182.5L258.0,181.5L256.9,179.5L256.6,177.8L258.6,177.6L259.6,176.4L259.9,175.1L260.5,173.3L260.9,171.6L261.1,170.1L260.2,169.9L258.6,170.5L256.8,170.7L254.5,169.6L253.1,170.5L251.3,169.8L250.5,169.3L250.4,167.3L249.4,166.9L249.9,165.5L249.0,165.3L249.2,164.5L250.7,164.0L252.5,164.0L252.5,163.1L255.0,162.8L257.4,161.5L259.8,161.3L261.6,162.6L264.0,163.1L265.8,163.1L267.6,162.1L267.6,160.7L265.8,159.0L263.4,157.3L262.2,156.5L261.8,156.0L263.7,154.4L264.9,152.6L262.8,153.0L259.8,154.4L260.2,155.8L261.5,156.0L260.4,156.5L258.6,157.5L258.0,157.2L256.8,155.8L258.1,154.6L256.2,154.2L255.0,153.7L253.5,155.6L252.2,157.3L251.9,159.0L251.1,160.3L251.3,161.5L251.7,162.3L252.4,162.8L250.7,163.1L249.8,163.9L249.2,164.4L248.9,163.6L247.7,163.3L246.5,163.4L246.3,164.4L245.1,163.9L244.9,165.5L245.5,166.2L245.3,167.3L246.5,167.8L246.5,168.3L245.3,168.6L245.5,170.1L244.6,170.1L243.7,169.6L243.1,168.1L243.5,167.3L242.6,166.4L241.9,165.3L241.1,163.9L240.9,162.3L240.5,161.2L239.0,160.0L237.1,158.8L235.9,157.7L235.0,156.1L234.2,156.7L234.1,155.4L232.5,155.8L232.4,157.7L233.9,158.8L234.7,160.7L236.8,161.6L237.4,162.6L239.3,163.7L239.9,164.5L239.3,164.8L238.0,163.9L237.6,165.2L238.2,166.2L237.4,167.2L236.5,167.8L236.7,166.7L237.0,165.8L236.3,164.5L235.5,164.2L234.8,163.4L233.2,162.6L232.2,161.8L230.8,160.7L230.2,159.8L229.8,158.3L228.3,157.5L226.6,158.5L225.0,159.7L223.5,159.2L222.3,159.0L221.2,159.7L221.4,161.0L220.2,162.5L218.5,163.4L217.3,165.3L217.7,166.6L216.9,167.3L216.5,168.4L215.1,169.6L212.2,169.8L211.0,170.7L209.9,169.9L209.0,169.0L207.8,169.3ZM-228.4,169.3L-229.0,166.7L-228.1,163.1L-228.7,159.8L-227.2,158.7L-224.1,158.8L-221.7,159.0L-219.7,159.2L-218.9,157.2L-218.8,154.8L-220.2,152.8L-222.9,151.6L-223.3,150.5L-221.1,149.8L-219.4,150.1L-219.7,148.1L-218.9,148.6L-217.3,148.5L-215.7,147.3L-215.6,145.8L-213.6,144.9L-212.7,143.7L-211.8,141.9L-210.9,141.1L-209.0,140.9L-207.6,140.5L-207.1,139.7L-206.7,138.8L-207.5,137.6L-207.7,136.3L-207.7,133.9L-207.1,133.0L-204.8,131.7L-205.1,133.7L-204.4,134.8L-205.4,137.0L-205.9,138.0L-205.4,138.8L-204.2,139.7L-203.0,139.3L-201.2,138.8L-200.2,139.9L-197.8,139.1L-195.1,138.2L-193.7,138.8L-193.3,137.8L-192.1,137.0L-192.1,133.7L-191.4,132.1L-190.2,131.7L-189.5,133.3L-188.3,133.0L-188.0,130.3L-189.1,129.2L-189.1,128.2L-187.3,127.5L-183.7,127.5L-181.0,126.6L-182.7,125.1L-184.9,125.1L-187.3,125.8L-189.8,126.6L-191.8,124.6L-191.6,121.6L-191.9,119.3L-190.3,116.8L-187.9,113.8L-186.8,112.9L-187.9,110.9L-190.7,111.5L-191.8,114.6L-192.7,116.8L-195.1,119.0L-196.6,121.3L-196.7,124.6L-194.9,126.3L-194.9,127.8L-197.0,129.4L-197.6,132.1L-198.2,135.0L-200.0,135.5L-200.3,136.7L-201.9,136.7L-202.3,135.2L-202.4,133.5L-203.2,131.7L-204.0,128.7L-204.6,126.8L-205.7,128.7L-207.2,130.6L-209.0,131.0L-210.6,129.2L-211.5,125.6L-211.5,121.9L-210.2,119.8L-207.2,117.4L-204.9,117.4L-205.4,115.5L-203.6,113.2L-201.8,109.7L-200.0,106.3L-198.8,103.5L-196.4,100.8L-194.5,98.4L-191.5,97.0L-189.1,95.2L-186.3,93.4L-183.7,93.7L-180.0,95.9L-181.2,98.4L-177.6,99.4L-174.0,100.1L-168.6,104.7L-167.7,108.2L-171.6,110.0L-177.0,107.9L-175.4,114.6L-172.2,116.0L-168.6,114.3L-169.2,110.9L-166.4,109.1L-164.3,108.8L-164.3,104.1L-165.2,102.1L-161.9,104.1L-161.3,107.9L-159.5,105.1L-153.5,103.1L-151.6,103.5L-148.0,102.1L-145.0,102.5L-144.4,98.4L-139.6,99.8L-137.8,100.8L-136.5,101.5L-134.1,102.5L-134.7,98.4L-136.8,94.5L-134.7,89.9L-134.1,85.9L-131.1,85.1L-129.5,87.1L-129.9,93.7L-129.3,99.1L-130.5,105.7L-128.7,107.3L-128.1,102.5L-127.5,93.7L-127.5,87.9L-125.1,89.1L-123.2,88.7L-120.8,87.9L-117.8,91.9L-120.2,83.8L-113.0,81.6L-112.4,77.1L-106.3,73.3L-99.1,71.3L-91.5,63.3L-89.4,65.5L-82.2,69.8L-80.4,75.7L-84.6,81.6L-82.2,83.0L-79.8,83.4L-74.9,83.8L-68.3,85.1L-64.6,83.4L-61.6,86.7L-61.6,91.9L-59.2,94.5L-56.8,91.9L-52.0,92.2L-48.9,91.9L-48.3,87.9L-42.3,88.7L-37.5,89.1L-35.6,92.2L-33.2,94.1L-27.8,93.7L-24.2,95.6L-23.0,99.1L-18.7,98.8L-15.1,98.4L-11.5,97.4L-4.8,98.4L0.0,100.8L3.6,102.8L6.0,105.7L10.3,107.3L12.4,110.0L11.5,111.8L9.1,114.6L8.5,115.2L5.4,113.8L4.2,111.8L1.2,110.3L1.2,113.2L0.0,113.5L-1.8,114.3L-3.3,115.2L-1.2,118.2L-0.8,120.3L-3.6,120.0L-6.6,121.9L-9.7,123.9L-11.7,126.3L-14.5,125.6L-16.9,126.6L-18.7,126.6L-20.2,128.7L-20.5,131.0L-21.8,131.7L-20.3,135.0L-21.8,137.6L-24.2,141.3L-26.0,141.7L-26.3,143.7L-28.2,145.6L-29.0,142.7L-29.6,137.6L-29.2,133.7L-27.8,131.5L-25.4,129.9L-23.0,126.3L-19.9,122.6L-19.3,120.0L-23.6,121.9L-27.8,122.4L-30.8,127.3L-35.0,127.5L-38.1,128.0L-42.3,127.8L-45.3,128.2L-47.7,131.0L-50.8,134.4L-54.1,138.0L-51.6,139.3L-51.0,140.3L-48.9,139.3L-46.8,141.1L-46.9,143.3L-47.7,145.6L-47.7,150.3L-50.1,153.4L-53.2,157.3L-56.6,160.2L-58.1,159.7L-59.6,161.0L-60.8,162.3L-60.8,163.4L-63.4,165.0L-62.2,167.0L-61.1,169.3L-61.1,171.6L-61.9,172.2L-63.4,172.7L-64.9,173.0L-64.6,171.1L-64.3,169.3L-65.2,168.1L-66.5,167.0L-66.1,165.5L-67.2,164.7L-70.7,166.6L-70.1,163.7L-71.3,163.3L-73.1,165.0L-74.9,165.9L-73.9,167.5L-73.7,168.9L-71.5,168.1L-69.5,168.7L-69.5,169.5L-72.1,170.8L-73.3,172.3L-72.1,173.5L-71.4,175.5L-70.2,177.1L-70.2,178.2L-71.9,179.1L-70.1,179.6L-70.6,181.8L-71.9,183.6L-73.0,185.6L-74.7,187.0L-76.5,188.5L-79.4,189.7L-80.4,190.0L-82.4,190.8L-84.0,191.3L-84.2,192.4L-84.8,191.0L-86.6,190.8L-88.4,191.8L-89.7,193.9L-88.8,195.8L-86.8,197.8L-85.6,200.7L-85.4,202.9L-87.0,204.4L-88.2,204.9L-88.6,205.7L-90.6,207.1L-90.9,205.4L-92.4,204.6L-93.6,202.9L-95.5,202.0L-95.6,201.2L-96.7,201.3L-96.7,203.5L-97.6,205.0L-97.5,206.3L-96.3,207.4L-95.9,208.8L-94.6,209.4L-93.6,210.2L-92.7,211.7L-92.4,213.9L-91.6,215.8L-92.4,215.9L-93.9,214.8L-95.1,213.9L-96.2,211.0L-96.4,209.6L-97.1,208.7L-98.7,208.0L-98.7,206.0L-98.2,204.1L-98.4,202.3L-99.1,200.0L-99.6,197.3L-101.1,197.2L-102.3,198.2L-103.6,197.9L-103.3,195.4L-104.2,193.5L-106.0,191.5L-106.6,189.7L-108.1,189.8L-110.0,190.5L-112.4,190.9L-112.6,192.2L-114.6,193.3L-116.0,194.7L-118.1,196.9L-119.6,198.0L-120.6,198.8L-120.6,201.4L-121.1,203.5L-121.1,205.0L-122.0,206.2L-123.0,206.7L-123.9,207.7L-125.1,206.6L-125.7,204.7L-126.9,202.3L-127.7,199.8L-128.7,197.9L-129.3,195.4L-129.5,194.1L-129.7,191.5L-129.8,190.0L-130.4,191.3L-131.9,191.9L-134.4,189.8L-134.1,188.7L-135.1,188.0L-136.2,187.3L-136.9,186.6L-137.1,185.8L-139.6,186.0L-143.2,186.2L-146.2,185.8L-148.4,185.2L-148.9,183.6L-149.6,183.5L-151.6,184.1L-153.5,183.6L-155.3,182.4L-156.1,181.0L-156.8,179.5L-158.3,178.9L-158.9,179.6L-159.5,180.2L-158.9,181.5L-158.3,182.9L-157.1,184.0L-156.8,185.3L-156.1,186.6L-155.6,184.8L-155.1,186.0L-155.3,187.2L-154.1,187.5L-152.2,187.5L-150.7,185.9L-149.6,184.7L-149.4,186.4L-148.6,187.6L-146.7,188.1L-145.2,189.6L-146.6,192.2L-147.7,194.1L-148.6,194.4L-149.5,195.5L-151.0,196.7L-154.4,198.4L-158.3,200.4L-160.7,201.3L-163.1,201.9L-164.9,202.0L-165.3,201.3L-165.8,199.2L-166.1,197.3L-167.7,194.7L-169.2,192.8L-170.1,190.9L-171.0,188.3L-172.6,186.3L-174.0,184.3L-175.2,182.1L-175.3,180.2L-176.1,182.5L-177.0,181.5L-178.1,179.5L-178.4,177.8L-176.4,177.6L-175.4,176.4L-175.1,175.1L-174.5,173.3L-174.1,171.6L-173.9,170.1L-174.8,169.9L-176.4,170.5L-178.2,170.7L-180.5,169.6L-181.9,170.5L-183.7,169.8L-184.5,169.3L-184.6,167.3L-185.6,166.9L-185.1,165.5L-186.0,165.3L-185.8,164.5L-184.3,164.0L-182.5,164.0L-182.5,163.1L-180.0,162.8L-177.6,161.5L-175.2,161.3L-173.4,162.6L-171.0,163.1L-169.2,163.1L-167.4,162.1L-167.4,160.7L-169.2,159.0L-171.6,157.3L-172.8,156.5L-173.2,156.0L-171.3,154.4L-170.1,152.6L-172.2,153.0L-175.2,154.4L-174.8,155.8L-173.5,156.0L-174.6,156.5L-176.4,157.5L-177.0,157.2L-178.2,155.8L-176.9,154.6L-178.8,154.2L-180.0,153.7L-181.5,155.6L-182.8,157.3L-183.1,159.0L-183.9,160.3L-183.7,161.5L-183.3,162.3L-182.6,162.8L-184.3,163.1L-185.2,163.9L-185.8,164.4L-186.1,163.6L-187.3,163.3L-188.5,163.4L-188.7,164.4L-189.9,163.9L-190.1,165.5L-189.5,166.2L-189.7,167.3L-188.5,167.8L-188.5,168.3L-189.7,168.6L-189.5,170.1L-190.4,170.1L-191.3,169.6L-191.9,168.1L-191.5,167.3L-192.4,166.4L-193.1,165.3L-193.9,163.9L-194.1,162.3L-194.5,161.2L-196.0,160.0L-197.9,158.8L-199.1,157.7L-200.0,156.1L-200.8,156.7L-200.9,155.4L-202.5,155.8L-202.6,157.7L-201.1,158.8L-200.3,160.7L-198.2,161.6L-197.6,162.6L-195.8,163.7L-195.1,164.5L-195.8,164.8L-197.0,163.9L-197.4,165.2L-196.8,166.2L-197.6,167.2L-198.5,167.8L-198.3,166.7L-198.0,165.8L-198.6,164.5L-199.5,164.2L-200.2,163.4L-201.8,162.6L-202.8,161.8L-204.2,160.7L-204.8,159.8L-205.2,158.3L-206.7,157.5L-208.4,158.5L-210.0,159.7L-211.5,159.2L-212.7,159.0L-213.8,159.7L-213.6,161.0L-214.8,162.5L-216.5,163.4L-217.7,165.3L-217.3,166.6L-218.1,167.3L-218.5,168.4L-219.9,169.6L-222.8,169.8L-224.0,170.7L-225.1,169.9L-226.0,169.0L-227.2,169.3ZM210.6,147.3L213.3,147.0L215.1,146.4L217.5,146.0L219.2,145.2L218.3,144.7L219.6,142.5L217.9,141.7L217.5,140.5L217.3,139.3L215.7,137.6L215.1,135.9L213.9,135.5L215.1,133.3L215.3,131.9L212.7,131.7L213.8,129.6L211.5,129.6L210.5,132.1L210.7,134.4L210.9,136.7L211.7,136.3L211.5,138.2L213.3,137.8L213.6,139.5L213.9,140.9L212.1,141.1L212.4,142.1L212.5,143.1L211.2,144.1L213.3,144.7L214.2,144.7L212.4,145.2ZM210.0,141.1L209.9,143.3L207.8,144.1L205.4,144.5L205.1,143.3L206.0,141.3L205.4,139.3L207.2,138.6L207.6,137.2L210.0,137.2L210.9,138.6ZM232.6,167.8L236.3,167.5L235.7,169.8L232.6,168.4ZM227.4,162.8L229.2,163.1L229.1,165.9L227.7,166.2ZM227.9,160.7L229.0,159.8L228.9,162.3L228.0,162.3ZM245.9,171.4L249.3,171.9L249.2,172.3L246.0,172.0ZM256.5,172.3L259.2,171.4L258.5,172.3L257.4,172.9ZM230.2,52.2L234.4,48.8L239.3,48.1L242.9,55.5L239.9,58.6L243.5,61.5L238.0,69.2L234.4,64.4L231.4,56.7ZM239.3,46.7L244.1,45.3L250.1,47.4L247.7,53.5L241.7,52.2ZM242.9,58.6L246.5,60.4L245.3,64.9L242.9,63.8ZM271.9,45.3L277.9,42.3L276.7,47.4L273.1,48.1ZM281.5,41.5L287.6,36.7L292.4,39.1L290.0,46.0L284.0,46.7ZM292.4,43.8L296.6,42.3L294.8,46.7ZM279.7,90.7L280.9,86.7L282.1,82.5L284.6,76.2L288.8,71.3L294.8,69.8L300.3,67.1L300.6,69.8L296.0,73.3L291.2,76.2L288.8,80.3L286.4,85.9L286.7,91.9L287.0,94.8L284.0,95.2L282.1,94.5ZM335.9,56.7L332.9,48.8L333.5,39.9L338.3,45.3L343.2,53.5L345.6,59.8L338.3,61.5ZM383.6,76.2L387.9,72.3L393.9,74.8L398.8,76.2L396.3,78.1L390.3,78.1L386.7,78.5L384.2,78.5ZM386.7,84.2L390.9,82.1L390.3,85.1ZM433.8,93.0L438.0,92.6L437.4,94.1L433.8,94.1ZM-1.2,93.0L3.0,92.6L2.4,94.1L-1.2,94.1ZM389.1,139.1L390.3,140.7L390.7,145.6L392.3,149.4L390.3,153.0L390.9,154.4L389.1,154.8L389.1,151.2L389.3,147.5L388.7,143.7ZM386.4,160.5L388.2,159.5L388.7,155.8L390.9,157.7L393.1,157.7L393.6,159.3L390.7,161.5L387.9,160.7L387.0,162.3ZM387.8,162.3L388.5,163.9L389.1,165.5L387.9,167.3L387.8,169.5L387.6,171.3L386.4,172.3L385.2,172.7L383.0,172.9L382.9,173.3L381.6,174.5L380.9,173.3L379.4,172.9L377.6,173.3L375.8,173.8L375.8,173.2L377.6,171.7L380.0,171.4L381.8,171.3L382.8,168.9L383.3,169.6L384.9,168.7L386.1,167.0L386.7,164.7L387.0,162.8ZM377.6,174.1L380.0,173.3L380.3,174.1L378.2,175.5ZM374.3,174.9L375.8,173.9L376.9,175.1L376.3,177.5L375.4,178.1L374.8,176.7ZM364.3,186.0L364.9,186.6L363.6,190.2L362.6,188.9L363.7,186.3ZM348.8,193.9L351.0,192.7L351.6,193.3L350.4,195.0L348.8,194.7ZM363.2,194.7L365.2,194.7L365.2,197.5L364.3,198.5L364.6,200.2L367.3,201.7L366.1,200.8L364.9,200.7L363.3,200.0L362.6,199.4L362.5,197.7L363.0,196.0ZM364.9,209.0L366.7,207.1L369.1,205.6L370.4,207.8L370.0,209.9L369.1,210.7L367.3,209.6L367.3,208.4L366.5,208.4ZM367.7,202.3L369.4,202.6L368.9,205.1L367.9,204.7ZM364.9,203.1L366.4,203.5L366.5,206.3L365.4,205.8L364.9,204.7ZM359.1,207.3L361.9,203.8L361.7,205.0L359.6,207.1ZM363.1,201.2L364.3,201.4L364.1,202.5L363.5,202.3ZM349.2,215.7L350.4,215.4L352.0,214.5L354.0,213.6L355.2,212.1L357.1,210.8L358.5,209.0L359.7,209.6L361.5,211.2L360.3,212.3L359.8,213.3L360.1,214.8L361.3,216.3L359.8,216.7L359.5,218.5L358.0,219.6L358.0,221.1L357.7,222.3L356.0,222.3L355.9,221.6L354.0,221.4L352.6,221.7L350.7,221.1L350.5,219.3L349.4,218.1L349.2,217.1ZM332.7,210.7L335.3,211.2L336.8,212.9L338.7,214.2L340.1,215.1L342.0,216.7L342.9,218.1L343.8,219.7L345.6,221.1L345.5,222.9L345.3,224.5L343.9,224.5L342.6,223.3L341.1,222.2L339.5,220.5L338.7,218.6L337.1,216.5L335.9,214.8L334.7,213.5L332.9,211.7ZM344.6,225.7L345.7,224.6L348.6,225.5L351.0,225.7L351.6,225.2L353.7,225.9L355.9,226.8L355.7,228.1L352.2,227.6L348.6,227.0L346.1,226.5ZM356.5,227.3L358.9,227.6L361.3,227.6L361.3,228.2L358.9,228.4L356.7,228.1ZM362.3,227.7L366.1,227.4L366.1,228.2L362.5,228.3ZM366.7,230.0L368.5,228.4L371.2,227.7L370.4,228.7L367.9,229.9ZM361.3,229.0L363.5,229.4L362.7,230.0L361.5,229.5ZM362.3,216.5L363.5,215.9L366.1,216.3L368.8,215.6L367.9,216.9L366.1,216.9L363.1,216.9L362.5,218.5L364.3,218.7L366.5,218.5L365.9,219.3L364.3,219.9L365.3,221.5L366.4,222.9L365.5,224.2L364.6,223.3L363.7,221.7L363.1,224.3L361.9,224.2L361.9,221.7L361.1,220.8L361.7,219.0ZM371.6,215.1L372.8,215.7L373.0,217.1L372.2,218.5L371.8,216.5ZM372.2,221.1L375.6,221.1L375.2,221.9L372.4,221.7ZM375.8,218.5L377.6,218.0L379.4,218.5L379.8,220.5L381.2,221.5L383.0,219.9L384.2,219.4L387.9,220.6L390.3,221.5L392.1,222.1L393.7,223.5L395.1,224.8L396.1,225.4L395.1,225.7L396.3,227.2L397.9,228.4L399.7,230.0L398.1,230.0L395.7,229.6L394.5,228.3L392.7,226.8L390.9,227.4L390.3,228.7L387.9,228.5L386.1,227.3L384.2,227.6L385.2,226.0L384.9,225.0L383.6,223.8L381.2,222.8L378.8,222.3L378.0,221.7L378.0,220.9L379.2,220.3L377.0,219.9L375.8,219.2ZM396.7,224.2L399.4,223.5L401.4,222.6L401.2,223.9L397.5,225.1ZM399.7,220.6L401.8,221.7L402.4,223.2L401.5,222.3L399.7,221.0ZM406.0,226.0L410.8,228.4L412.6,230.0L410.8,229.4L406.6,227.0ZM415.7,242.4L418.7,244.2L419.3,245.2L417.5,244.5L415.7,242.9ZM431.7,239.0L433.3,239.0L433.2,239.9L431.7,239.7ZM314.2,205.6L315.6,207.2L316.3,209.0L315.7,210.0L314.4,210.2L313.8,208.4L314.0,206.7ZM389.7,230.5L390.9,232.7L391.3,235.1L393.1,235.8L393.3,237.7L394.2,240.6L396.1,241.5L397.5,242.8L399.7,246.1L400.6,247.4L402.6,249.4L403.0,253.0L402.4,256.9L401.8,259.1L400.3,260.9L399.0,264.2L398.8,266.4L396.3,267.1L394.5,268.8L392.7,267.7L390.9,268.4L387.9,267.4L386.4,265.7L386.1,263.9L384.9,263.4L384.9,262.4L384.0,263.0L384.0,259.8L383.4,260.9L381.8,262.4L380.9,262.0L379.7,259.5L377.0,258.3L373.4,257.8L369.8,258.8L367.3,259.8L366.7,261.1L362.5,261.1L360.1,262.7L357.7,262.6L356.5,261.7L357.3,258.3L356.5,255.9L355.5,252.1L354.4,250.1L354.8,248.0L355.0,245.4L356.2,244.2L358.6,242.9L361.3,242.2L363.7,241.7L365.2,239.6L365.3,238.3L366.9,238.7L367.1,237.3L368.5,236.1L370.4,234.6L372.2,235.6L374.0,235.7L374.3,234.0L375.6,232.6L377.6,232.2L377.7,231.2L380.6,232.4L382.8,232.1L381.8,234.0L381.2,235.8L383.6,237.3L385.7,239.0L387.6,239.0L388.5,236.5L388.6,233.3L389.2,230.9ZM392.3,271.4L396.6,271.6L396.7,273.5L395.7,275.8L393.9,276.2L393.1,274.0ZM426.2,261.8L428.1,263.4L429.6,265.1L430.2,266.6L433.2,266.7L432.5,269.1L431.4,269.5L431.3,270.8L429.3,272.9L429.0,270.8L427.5,269.4L428.7,267.2L428.4,265.1L426.8,263.0ZM426.2,271.1L428.0,272.2L428.0,273.2L426.3,276.0L426.5,276.7L424.5,277.5L423.9,280.1L422.3,281.3L420.9,281.3L418.7,280.2L419.1,278.5L420.9,276.8L423.5,275.0L424.7,273.2L425.5,271.7ZM29.0,192.6L30.2,193.1L29.5,194.1L29.0,193.5ZM300.6,285.6L302.7,286.0L302.1,286.9L300.8,286.7ZM171.6,295.3L174.0,295.9L174.0,297.0L172.2,296.2ZM104.5,74.3L100.9,74.3L101.5,77.6L104.5,78.1ZM84.6,65.5L79.1,64.9L81.0,59.8L85.2,60.9ZM84.6,59.8L80.4,59.2L82.2,55.5L85.2,56.7ZM102.1,61.5L99.1,60.4L99.7,56.1L102.1,57.3ZM125.7,85.9L120.2,85.1L120.8,82.5L124.5,83.0ZM75.5,74.8L73.1,74.3L73.7,72.3L75.5,72.8ZM91.2,85.1L89.4,85.1L89.4,82.5L91.2,83.0ZM44.3,435.6L39.3,428.7L35.2,422.7L32.2,414.6L30.2,406.6L30.2,398.5L34.2,394.1L41.3,390.9L37.3,388.5L30.2,386.4L27.2,382.4L26.2,377.4L28.2,371.3L35.2,367.9L41.3,364.7L45.3,361.3L55.4,356.6L64.4,354.8L73.5,353.8L82.5,353.8L88.6,356.2L92.6,357.7L96.0,351.2L92.6,346.6L98.6,344.2L106.7,348.2L116.8,350.2L123.8,349.2L126.8,343.2L125.2,336.5L131.3,335.1L136.5,330.1L138.9,324.0L144.5,318.4L149.5,315.5L152.0,316.5L148.6,319.0L143.3,326.1L140.1,332.5L143.7,340.1L144.9,348.2L142.1,356.2L137.3,361.3L134.9,365.9L136.9,369.9L133.3,373.4L128.8,372.3L126.8,367.7L123.2,366.3L118.8,369.3L119.6,376.4L121.8,382.8L126.8,388.5L134.9,390.5L142.9,387.6L149.4,382.8L153.4,377.4L157.0,371.9L163.1,373.4L165.5,380.4L163.5,387.4L158.0,390.9L152.0,387.4L145.9,390.9L138.9,395.5L131.9,398.5L133.3,403.5L138.9,406.2L145.9,406.6L147.0,410.2L152.0,403.5L159.0,399.5L169.1,396.5L175.1,388.9L180.2,387.4L181.2,382.4L175.5,378.8L173.5,376.0L180.2,368.3L189.2,358.3L199.3,350.2L209.4,344.2L218.0,340.5L230.1,338.1L246.2,337.1L258.3,334.1L266.3,335.3L276.4,327.3L282.4,324.0L288.5,327.1L298.5,331.1L301.5,336.1L302.5,341.1L306.6,337.1L314.6,329.1L326.7,326.1L338.8,325.0L348.8,327.1L354.9,325.0L371.0,327.1L379.0,325.0L389.1,327.1L399.2,332.1L409.2,337.1L419.3,342.2L423.3,348.2L417.3,356.2L414.3,364.3L419.3,371.3L415.3,378.4L411.2,386.4L412.2,398.5L416.3,406.6L421.3,414.6L431.4,422.7L436.4,425.1L437.0,437.0L44.0,437.0ZM-1.0,437.0L-1.0,423.7L6.0,421.7L12.0,425.7L17.5,437.0ZM19.7,378.4L23.2,378.0L25.2,382.0L23.2,385.4L20.1,384.0L18.7,380.8Z"/><path fill="#ecebed" stroke="#ecebed" stroke-width="2.2" stroke-linejoin="round" d="M143.2,108.8L140.2,113.2L139.0,118.7L137.8,121.3L134.7,120.0L130.5,116.6L127.5,114.6L123.2,114.6L124.5,111.8L128.7,110.3L129.3,103.5L125.7,100.8L122.6,97.4L118.4,97.4L113.6,95.6L110.0,93.7L109.4,83.8L114.8,82.5L119.6,83.8L123.2,86.7L126.9,87.9L131.7,92.6L135.3,96.3L136.5,100.8L140.2,105.7ZM95.5,100.8L90.6,102.5L84.6,102.1L79.8,103.1L76.1,100.8L77.3,97.4L74.9,93.7L73.7,91.5L76.1,86.7L79.8,84.7L84.6,85.9L89.4,83.8L91.8,89.9L95.5,91.9L95.5,97.4ZM65.5,89.9L68.9,93.4L71.3,92.2L73.1,87.9L76.1,84.2L77.9,82.5L77.3,80.3L72.5,79.4L67.7,80.3L67.1,83.8ZM110.0,70.3L120.8,71.3L123.2,67.1L126.3,58.6L130.5,50.9L136.5,43.0L142.6,33.3L140.2,25.0L130.5,23.1L120.8,24.0L112.4,31.6L106.9,37.5L112.4,45.3L114.8,53.5L112.4,60.4L110.6,64.4ZM101.5,44.5L107.5,40.7L111.2,48.8L111.8,55.5L108.1,59.8L104.5,55.5L101.5,48.8ZM120.8,78.5L113.6,79.4L106.9,78.5L106.3,73.3L110.0,74.8L116.0,73.3L120.2,74.3ZM108.1,82.5L102.7,81.6L102.1,85.9L103.9,89.9L106.9,87.9ZM100.3,82.5L94.2,85.9L96.7,90.7L100.3,91.9L100.9,86.7ZM90.0,73.3L84.6,70.8L76.1,71.3L76.1,75.7L81.0,79.4L87.0,78.1L90.0,77.1ZM99.7,74.8L96.7,69.2L91.8,69.8L94.2,76.2L99.1,77.1ZM77.9,72.3L68.9,71.3L72.5,65.5L77.3,64.4ZM97.9,61.5L91.8,59.8L90.6,54.2L96.7,53.5ZM120.2,116.6L112.4,117.4L113.0,111.8L116.0,110.3L119.0,114.6ZM102.1,100.8L97.9,100.8L97.3,98.1L100.9,97.4ZM104.5,74.3L100.9,74.3L101.5,77.6L104.5,78.1ZM84.6,65.5L79.1,64.9L81.0,59.8L85.2,60.9ZM84.6,59.8L80.4,59.2L82.2,55.5L85.2,56.7ZM102.1,61.5L99.1,60.4L99.7,56.1L102.1,57.3ZM125.7,85.9L120.2,85.1L120.8,82.5L124.5,83.0ZM75.5,74.8L73.1,74.3L73.7,72.3L75.5,72.8ZM91.2,85.1L89.4,85.1L89.4,82.5L91.2,83.0Z"/><path fill="#d3ced4" d="M274.3,156.5L276.7,153.9L279.7,153.4L281.5,154.8L281.5,156.5L279.1,157.3L278.3,157.7L279.5,159.8L280.9,160.7L281.3,162.3L281.5,163.9L281.3,164.7L282.5,166.2L282.5,168.6L282.6,169.5L280.3,169.9L278.3,168.9L276.7,168.4L276.6,167.2L277.1,165.8L277.3,164.2L278.3,164.2L277.3,163.4L276.3,161.8L274.9,159.8L274.9,158.2L273.9,157.3ZM288.2,153.9L291.2,154.8L290.6,158.2L288.2,158.2ZM343.2,144.7L345.6,142.7L349.8,136.5L350.4,136.1L348.0,141.7L344.4,144.7ZM254.4,126.3L255.0,123.1L257.1,123.4L257.1,125.6ZM259.2,123.9L259.8,120.0L261.0,121.3L260.8,123.9ZM306.3,155.4L309.3,153.4L313.0,153.7L313.0,154.4L309.3,154.4L306.9,156.5ZM106.3,153.5L110.0,151.2L113.6,150.3L115.4,153.4L112.4,153.9L109.4,153.4ZM111.2,161.5L113.0,161.5L114.2,155.6L112.4,155.1L111.4,158.2ZM116.0,154.8L119.6,155.1L120.8,157.2L118.8,159.5L116.6,158.5L116.8,156.5ZM116.8,162.0L119.6,162.1L122.0,160.2L120.8,160.2L117.8,161.0ZM121.2,159.3L125.3,159.0L125.1,157.8L122.0,158.5ZM68.9,110.3L72.5,107.3L74.9,107.9L74.9,113.2L70.1,113.2ZM76.1,123.9L79.8,120.8L82.2,119.3L85.8,120.0L82.2,121.9L79.8,123.9ZM97.9,146.6L98.1,140.1L99.9,140.1L100.9,146.6ZM82.8,129.4L88.2,127.5L89.4,128.2L84.6,129.9ZM256.2,217.1L258.6,217.5L258.6,220.5L256.2,220.5ZM252.9,221.7L253.5,223.5L254.8,227.8L254.4,227.8L253.0,224.2ZM258.7,229.2L259.4,230.9L259.7,234.6L259.2,234.6L258.8,231.5Z"/>
<circle cx="92.5" cy="127.2" r="4.4" fill="#ec6f43" fill-opacity="0.92"/>
<circle cx="98.1" cy="164.9" r="4.4" fill="#35a35a" fill-opacity="0.92"/>
<circle cx="93.6" cy="187.8" r="4.4" fill="#df4a3b" fill-opacity="0.92"/>
<circle cx="238.4" cy="117.5" r="4.4" fill="#e5553e" fill-opacity="0.92"/>
<circle cx="228.3" cy="130.3" r="4.4" fill="#df483b" fill-opacity="0.92"/>
<circle cx="229.4" cy="135.1" r="4.4" fill="#e04b3b" fill-opacity="0.92"/>
<circle cx="207.8" cy="141.2" r="4.4" fill="#e14d3c" fill-opacity="0.92"/>
<circle cx="214.7" cy="139.5" r="4.4" fill="#ea6940" fill-opacity="0.92"/>
<circle cx="224.7" cy="144.2" r="4.4" fill="#e24f3c" fill-opacity="0.92"/>
<circle cx="225.4" cy="147.2" r="4.4" fill="#e24f3c" fill-opacity="0.92"/>
<circle cx="231.2" cy="145.4" r="4.4" fill="#e75c3e" fill-opacity="0.92"/>
<circle cx="242.0" cy="143.7" r="4.4" fill="#e5553d" fill-opacity="0.92"/>
<circle cx="236.9" cy="148.3" r="4.4" fill="#e04b3b" fill-opacity="0.92"/>
<circle cx="242.0" cy="153.3" r="4.4" fill="#e14d3c" fill-opacity="0.92"/>
<circle cx="220.6" cy="154.0" r="4.4" fill="#e4523d" fill-opacity="0.92"/>
<circle cx="228.4" cy="153.3" r="4.4" fill="#e9623f" fill-opacity="0.92"/>
<circle cx="232.4" cy="159.3" r="4.4" fill="#ea6940" fill-opacity="0.92"/>
<circle cx="208.5" cy="164.9" r="4.4" fill="#e04a3b" fill-opacity="0.92"/>
<circle cx="213.5" cy="164.1" r="4.4" fill="#e5553d" fill-opacity="0.92"/>
<circle cx="245.2" cy="165.8" r="4.4" fill="#de463a" fill-opacity="0.92"/>
<circle cx="260.6" cy="166.6" r="4.4" fill="#de463a" fill-opacity="0.92"/>
<circle cx="260.6" cy="177.0" r="4.4" fill="#e8633f" fill-opacity="0.92"/>
<circle cx="253.8" cy="184.7" r="4.4" fill="#de463a" fill-opacity="0.92"/>
<circle cx="343.9" cy="168.2" r="4.4" fill="#de463a" fill-opacity="0.92"/>
<circle cx="372.3" cy="169.7" r="4.4" fill="#de463a" fill-opacity="0.92"/>
<circle cx="384.5" cy="169.7" r="4.4" fill="#de463a" fill-opacity="0.92"/>
<circle cx="314.0" cy="188.5" r="4.4" fill="#de463a" fill-opacity="0.92"/>
<circle cx="340.2" cy="198.8" r="4.4" fill="#de463a" fill-opacity="0.92"/>
<circle cx="365.0" cy="197.7" r="4.4" fill="#de463a" fill-opacity="0.92"/>
<circle cx="343.5" cy="215.4" r="4.4" fill="#de463a" fill-opacity="0.92"/>
<circle cx="154.2" cy="231.3" r="4.4" fill="#e5553e" fill-opacity="0.92"/>
<circle cx="131.3" cy="266.8" r="4.4" fill="#de463a" fill-opacity="0.92"/>
<circle cx="380.4" cy="250.1" r="4.4" fill="#de463a" fill-opacity="0.92"/>
</svg>
<div class="abs" style="left:457px;top:521px;width:143px;height:14px;background:rgba(252,253,251,0.85)"></div>
<div class="t" style="left:462px;top:523px;font-size:10px;letter-spacing:0.04px;color:#444;line-height:12px;height:12px">Esri, HERE, Garmin, NGA, USGS | Esri</div>
<svg style="left:0;top:0" width="835" height="552" viewBox="457 42 835 552"><path d="M1080 550V562M1079 556H1164M1163 550V557M1161 556V562" stroke="#333" stroke-width="2" fill="none"/></svg>
<div class="t" style="left:701px;top:498px;font-size:9.2px;font-weight:bold;letter-spacing:0;color:#444;line-height:10px;height:10px">1000km</div>
<div class="t" style="left:700px;top:519px;font-size:9.2px;font-weight:bold;letter-spacing:0;color:#444;line-height:10px;height:10px">600mi</div>
<div class="t" style="left:651px;top:505px;font-size:5.6px;font-weight:bold;letter-spacing:0.1px;color:#fff;line-height:7px;height:7px;text-shadow:0 0 1.2px #555,0 0 1.5px #666,0 0 2px #888">POWERED BY</div>
<div class="abs" style="left:693px;top:506px;width:6px;height:6px;border-radius:3px;background:#fff;box-shadow:0 0 2px #666,0 0 3px #999"></div>
<div class="t" style="left:649px;top:507px;font-size:27.5px;font-weight:bold;letter-spacing:0.55px;color:#fff;line-height:30px;height:30px;text-shadow:0 0 2px #777,0 0 3px #8a8a8a,0 0 1.5px #999">esri</div>
<div class="abs" style="left:693px;top:94px;width:57px;height:19px;border-radius:4px;background:#fdfdfd;box-shadow:0 1px 3px rgba(60,70,90,0.3),0 0 1px rgba(60,70,90,0.25)"></div>
<svg style="left:0;top:0" width="835" height="200" viewBox="457 42 835 200"><path d="M1158.2 143.6L1162 146.7L1158.2 149.8Z" fill="#111"/></svg>
<div class="t" style="left:710px;top:98px;font-size:10px;letter-spacing:0;color:#333;line-height:12px;height:12px">Layers</div>
<div class="t" style="left:763px;top:152px;font-size:9px;letter-spacing:-0.27px;color:#111;line-height:10px;height:10px">Cost of Goods</div>
<svg style="left:0;top:0" width="835" height="552" viewBox="457 42 835 552" shape-rendering="crispEdges"><rect x="1223" y="213.00" width="21" height="6.14" fill="#209b52"/><rect x="1223" y="218.84" width="21" height="6.14" fill="#2ca155"/><rect x="1223" y="224.68" width="21" height="6.14" fill="#38a758"/><rect x="1223" y="230.52" width="21" height="6.14" fill="#45ad5b"/><rect x="1223" y="236.36" width="21" height="6.14" fill="#51b35e"/><rect x="1223" y="242.20" width="21" height="6.14" fill="#5db961"/><rect x="1223" y="248.04" width="21" height="6.14" fill="#69be63"/><rect x="1223" y="253.88" width="21" height="6.14" fill="#73c364"/><rect x="1223" y="259.72" width="21" height="6.14" fill="#7dc766"/><rect x="1223" y="265.56" width="21" height="6.14" fill="#87cc67"/><rect x="1223" y="271.40" width="21" height="6.14" fill="#92d068"/><rect x="1223" y="277.24" width="21" height="6.14" fill="#9cd569"/><rect x="1223" y="283.08" width="21" height="6.14" fill="#a6d96a"/><rect x="1223" y="288.92" width="21" height="6.14" fill="#aedd6f"/><rect x="1223" y="294.76" width="21" height="6.14" fill="#b6e075"/><rect x="1223" y="300.60" width="21" height="6.14" fill="#bee47a"/><rect x="1223" y="306.44" width="21" height="6.14" fill="#c7e77f"/><rect x="1223" y="312.28" width="21" height="6.14" fill="#cfeb84"/><rect x="1223" y="318.12" width="21" height="6.14" fill="#d7ee8a"/><rect x="1223" y="323.96" width="21" height="6.14" fill="#def191"/><rect x="1223" y="329.80" width="21" height="6.14" fill="#e4f39a"/><rect x="1223" y="335.64" width="21" height="6.14" fill="#eaf6a2"/><rect x="1223" y="341.48" width="21" height="6.14" fill="#f0f9aa"/><rect x="1223" y="347.32" width="21" height="6.14" fill="#f6fbb3"/><rect x="1223" y="353.16" width="21" height="6.14" fill="#fcfebb"/><rect x="1223" y="359.00" width="21" height="6.14" fill="#fffdbb"/><rect x="1223" y="364.84" width="21" height="6.14" fill="#fff8b3"/><rect x="1223" y="370.68" width="21" height="6.14" fill="#fff3aa"/><rect x="1223" y="376.52" width="21" height="6.14" fill="#feeea2"/><rect x="1223" y="382.36" width="21" height="6.14" fill="#fee99a"/><rect x="1223" y="388.20" width="21" height="6.14" fill="#fee491"/><rect x="1223" y="394.04" width="21" height="6.14" fill="#fede89"/><rect x="1223" y="399.88" width="21" height="6.14" fill="#fed683"/><rect x="1223" y="405.72" width="21" height="6.14" fill="#fece7c"/><rect x="1223" y="411.56" width="21" height="6.14" fill="#fdc675"/><rect x="1223" y="417.40" width="21" height="6.14" fill="#fdbe6e"/><rect x="1223" y="423.24" width="21" height="6.14" fill="#fdb668"/><rect x="1223" y="429.08" width="21" height="6.14" fill="#fdae61"/><rect x="1223" y="434.92" width="21" height="6.14" fill="#fca45c"/><rect x="1223" y="440.76" width="21" height="6.14" fill="#fa9957"/><rect x="1223" y="446.60" width="21" height="6.14" fill="#f98f53"/><rect x="1223" y="452.44" width="21" height="6.14" fill="#f7844e"/><rect x="1223" y="458.28" width="21" height="6.14" fill="#f67a49"/><rect x="1223" y="464.12" width="21" height="6.14" fill="#f47044"/><rect x="1223" y="469.96" width="21" height="6.14" fill="#f16640"/><rect x="1223" y="475.80" width="21" height="6.14" fill="#ec5c3b"/><rect x="1223" y="481.64" width="21" height="6.14" fill="#e75237"/><rect x="1223" y="487.48" width="21" height="6.14" fill="#e34832"/><rect x="1223" y="493.32" width="21" height="6.14" fill="#de3f2e"/><rect x="1223" y="499.16" width="21" height="6.14" fill="#d93529"/><rect x="1223" y="285.6" width="21" height="0.8" fill="#fff" fill-opacity="0.55"/><rect x="1223" y="358.6" width="21" height="0.8" fill="#fff" fill-opacity="0.55"/><rect x="1223" y="431.6" width="21" height="0.8" fill="#fff" fill-opacity="0.55"/></svg>
<div class="t" style="left:790px;top:166px;font-size:9px;letter-spacing:-0.3px;color:#444;line-height:10px;height:10px">392M</div>
<div class="t" style="left:790px;top:239px;font-size:9px;letter-spacing:-0.3px;color:#444;line-height:10px;height:10px">294M</div>
<div class="t" style="left:790px;top:312px;font-size:9px;letter-spacing:-0.3px;color:#444;line-height:10px;height:10px">196M</div>
<div class="t" style="left:790px;top:385px;font-size:9px;letter-spacing:-0.3px;color:#444;line-height:10px;height:10px">98M</div>
<div class="t" style="left:790px;top:458px;font-size:9px;letter-spacing:-0.3px;color:#444;line-height:10px;height:10px">0M</div>

</div>

<div class="abs" id="strip">
<div class="abs" style="left:36px;top:0;width:14px;height:513px;background:#f4f4f4"></div>
<div class="abs" style="left:36px;top:61px;width:14px;height:423px;background:#c9c9c5"></div>
<div class="abs" style="left:0;top:513px;width:50px;height:16px;background:#f4f4f4;border-bottom:1px solid #dcdcdc"></div>
<svg style="left:0;top:0" width="50" height="552" viewBox="1293 42 50 552"><path d="M1331.4 63.4L1336.3 58.6L1341.2 63.4" fill="none" stroke="#4a4a4a" stroke-width="2"/><path d="M1331.4 534.6L1336.3 539.4L1341.2 534.6" fill="none" stroke="#4a4a4a" stroke-width="2"/><path d="M1304.4 557.8L1299 562.4L1304.4 567" fill="none" stroke="#4a4a4a" stroke-width="1.9"/><path d="M1317 557.8L1322.4 562.4L1317 567" fill="none" stroke="#4a4a4a" stroke-width="1.9"/><path d="M1321.8 581.7H1314.6M1318 578L1314.2 581.7L1318 585.4" fill="none" stroke="#1d1d1d" stroke-width="1.9"/><rect x="1298" y="57.0" width="10.0" height="3" fill="#4682c4"/><rect x="1298" y="63.3" width="25.0" height="3" fill="#4682c4"/><rect x="1298" y="69.6" width="20.5" height="3" fill="#4682c4"/><rect x="1298" y="76.0" width="15.5" height="3" fill="#4682c4"/><rect x="1298.1" y="114.1" width="2.2" height="6.7" fill="#4682c4"/><rect x="1300.9" y="111.8" width="2.2" height="9.0" fill="#8fcf5f"/><rect x="1304.2" y="98.8" width="2.2" height="22.0" fill="#4682c4"/><rect x="1307.5" y="101.6" width="2.2" height="19.2" fill="#8fcf5f"/><rect x="1311.0" y="106.4" width="2.2" height="14.4" fill="#4682c4"/><rect x="1314.6" y="103.5" width="2.2" height="17.3" fill="#8fcf5f"/><rect x="1318.8" y="111.8" width="2.2" height="9.0" fill="#4682c4"/><rect x="1321.6" y="108.2" width="2.2" height="12.6" fill="#8fcf5f"/><path d="M1311.29 142.00A11.0 11.0 0 0 1 1317.07 143.83L1314.97 147.00A7.2 7.2 0 0 0 1311.19 145.80Z" fill="#f6cfa6"/><path d="M1317.54 144.16A11.0 11.0 0 0 1 1321.88 154.63L1318.12 154.06A7.2 7.2 0 0 0 1315.28 147.21Z" fill="#e2492f"/><path d="M1321.78 155.19A11.0 11.0 0 0 1 1313.19 163.78L1312.44 160.06A7.2 7.2 0 0 0 1318.06 154.44Z" fill="#f7c545"/><path d="M1312.63 163.88A11.0 11.0 0 0 1 1301.62 158.75L1304.86 156.76A7.2 7.2 0 0 0 1312.06 160.12Z" fill="#4ea23a"/><path d="M1301.33 158.25A11.0 11.0 0 0 1 1301.33 147.75L1304.67 149.56A7.2 7.2 0 0 0 1304.67 156.44Z" fill="#a2d86e"/><path d="M1301.62 147.25A11.0 11.0 0 0 1 1310.71 142.00L1310.81 145.80A7.2 7.2 0 0 0 1304.86 149.24Z" fill="#4682c4"/><path d="M1299.3 197L1307.5 193.5L1314.6 195.9L1322.4 186" fill="none" stroke="#4682c4" stroke-width="1.2"/><path d="M1299.3 203.6L1307.5 200.1L1314.1 190L1322.4 198.7" fill="none" stroke="#8fcf5f" stroke-width="1.2"/><circle cx="1299.3" cy="197.0" r="1" fill="#4682c4"/><circle cx="1307.5" cy="193.5" r="1" fill="#4682c4"/><circle cx="1314.6" cy="195.9" r="1" fill="#4682c4"/><circle cx="1322.4" cy="186.0" r="1" fill="#4682c4"/><circle cx="1299.3" cy="203.6" r="1" fill="#8fcf5f"/><circle cx="1307.5" cy="200.1" r="1" fill="#8fcf5f"/><circle cx="1314.1" cy="190.0" r="1" fill="#8fcf5f"/><circle cx="1322.4" cy="198.7" r="1" fill="#8fcf5f"/><path d="M1300.0 248.8L1300.0 234.7L1307.5 232.4L1313.4 233.5L1322.0 230.0L1322.0 248.8Z" fill="#de4b3b"/><path d="M1300.0 248.8L1300.0 236.2L1307.5 234.0L1313.4 235.0L1322.0 231.8L1322.0 248.8Z" fill="#f8b75e"/><path d="M1300.0 248.8L1300.0 237.8L1307.5 235.8L1313.4 236.8L1322.0 234.0L1322.0 248.8Z" fill="#fbd777"/><path d="M1300.0 248.8L1300.0 240.0L1307.5 238.5L1313.4 239.3L1322.0 237.0L1322.0 248.8Z" fill="#a5d873"/><path d="M1300.0 248.8L1300.0 242.0L1307.5 240.8L1313.4 241.5L1322.0 239.0L1322.0 248.8Z" fill="#8ccb60"/><path d="M1300.0 248.8L1300.0 244.8L1307.5 244.4L1313.4 244.6L1322.0 240.6L1322.0 248.8Z" fill="#4682c4"/><circle cx="1314.6" cy="271.6" r="2.0" fill="#4ea23a"/><circle cx="1303.3" cy="281.0" r="2.5" fill="#4682c4"/><circle cx="1318.8" cy="279.4" r="2.0" fill="#e2492f"/><circle cx="1310.6" cy="279.4" r="1.3" fill="#a2d86e"/><circle cx="1314.6" cy="283.6" r="1.2" fill="#f6a04a"/><circle cx="1309.9" cy="287.6" r="2.0" fill="#f7c545"/><g fill="#d8d8d8"><rect x="1300.0" y="270.0" width="0.7" height="0.7"/><rect x="1300.0" y="273.5" width="0.7" height="0.7"/><rect x="1300.0" y="277.0" width="0.7" height="0.7"/><rect x="1300.0" y="280.5" width="0.7" height="0.7"/><rect x="1300.0" y="284.0" width="0.7" height="0.7"/><rect x="1300.0" y="287.5" width="0.7" height="0.7"/><rect x="1300.0" y="291.0" width="0.7" height="0.7"/><rect x="1303.7" y="270.0" width="0.7" height="0.7"/><rect x="1303.7" y="273.5" width="0.7" height="0.7"/><rect x="1303.7" y="277.0" width="0.7" height="0.7"/><rect x="1303.7" y="280.5" width="0.7" height="0.7"/><rect x="1303.7" y="284.0" width="0.7" height="0.7"/><rect x="1303.7" y="287.5" width="0.7" height="0.7"/><rect x="1303.7" y="291.0" width="0.7" height="0.7"/><rect x="1307.4" y="270.0" width="0.7" height="0.7"/><rect x="1307.4" y="273.5" width="0.7" height="0.7"/><rect x="1307.4" y="277.0" width="0.7" height="0.7"/><rect x="1307.4" y="280.5" width="0.7" height="0.7"/><rect x="1307.4" y="284.0" width="0.7" height="0.7"/><rect x="1307.4" y="287.5" width="0.7" height="0.7"/><rect x="1307.4" y="291.0" width="0.7" height="0.7"/><rect x="1311.1" y="270.0" width="0.7" height="0.7"/><rect x="1311.1" y="273.5" width="0.7" height="0.7"/><rect x="1311.1" y="277.0" width="0.7" height="0.7"/><rect x="1311.1" y="280.5" width="0.7" height="0.7"/><rect x="1311.1" y="284.0" width="0.7" height="0.7"/><rect x="1311.1" y="287.5" width="0.7" height="0.7"/><rect x="1311.1" y="291.0" width="0.7" height="0.7"/><rect x="1314.8" y="270.0" width="0.7" height="0.7"/><rect x="1314.8" y="273.5" width="0.7" height="0.7"/><rect x="1314.8" y="277.0" width="0.7" height="0.7"/><rect x="1314.8" y="280.5" width="0.7" height="0.7"/><rect x="1314.8" y="284.0" width="0.7" height="0.7"/><rect x="1314.8" y="287.5" width="0.7" height="0.7"/><rect x="1314.8" y="291.0" width="0.7" height="0.7"/><rect x="1318.5" y="270.0" width="0.7" height="0.7"/><rect x="1318.5" y="273.5" width="0.7" height="0.7"/><rect x="1318.5" y="277.0" width="0.7" height="0.7"/><rect x="1318.5" y="280.5" width="0.7" height="0.7"/><rect x="1318.5" y="284.0" width="0.7" height="0.7"/><rect x="1318.5" y="287.5" width="0.7" height="0.7"/><rect x="1318.5" y="291.0" width="0.7" height="0.7"/><rect x="1322.2" y="270.0" width="0.7" height="0.7"/><rect x="1322.2" y="273.5" width="0.7" height="0.7"/><rect x="1322.2" y="277.0" width="0.7" height="0.7"/><rect x="1322.2" y="280.5" width="0.7" height="0.7"/><rect x="1322.2" y="284.0" width="0.7" height="0.7"/><rect x="1322.2" y="287.5" width="0.7" height="0.7"/><rect x="1322.2" y="291.0" width="0.7" height="0.7"/></g><path d="M1299.6 269V291.4H1323" fill="none" stroke="#dcdcdc" stroke-width="0.6"/><path d="M1299 334.2H1322.6" fill="none" stroke="#e0e0e0" stroke-width="0.6"/><circle cx="1299.4" cy="316.6" r="2.1" fill="#f7c545" fill-opacity="0.88"/><circle cx="1299.4" cy="316.6" r="0.7" fill="#fff" fill-opacity="0.8"/><circle cx="1299.4" cy="319.7" r="2.1" fill="#4ea23a" fill-opacity="0.88"/><circle cx="1299.4" cy="319.7" r="0.7" fill="#fff" fill-opacity="0.8"/><circle cx="1299.4" cy="324.2" r="2.1" fill="#a2d86e" fill-opacity="0.88"/><circle cx="1299.4" cy="324.2" r="0.7" fill="#fff" fill-opacity="0.8"/><circle cx="1299.4" cy="330.6" r="2.1" fill="#4682c4" fill-opacity="0.88"/><circle cx="1299.4" cy="330.6" r="0.7" fill="#fff" fill-opacity="0.8"/><circle cx="1306.6" cy="316.6" r="2.1" fill="#f7c545" fill-opacity="0.88"/><circle cx="1306.6" cy="316.6" r="0.7" fill="#fff" fill-opacity="0.8"/><circle cx="1306.6" cy="322.7" r="2.1" fill="#4ea23a" fill-opacity="0.88"/><circle cx="1306.6" cy="322.7" r="0.7" fill="#fff" fill-opacity="0.8"/><circle cx="1306.6" cy="325.2" r="2.1" fill="#a2d86e" fill-opacity="0.88"/><circle cx="1306.6" cy="325.2" r="0.7" fill="#fff" fill-opacity="0.8"/><circle cx="1306.6" cy="331.6" r="2.1" fill="#4682c4" fill-opacity="0.88"/><circle cx="1306.6" cy="331.6" r="0.7" fill="#fff" fill-opacity="0.8"/><circle cx="1314.9" cy="313.4" r="2.1" fill="#f7c545" fill-opacity="0.88"/><circle cx="1314.9" cy="313.4" r="0.7" fill="#fff" fill-opacity="0.8"/><circle cx="1314.9" cy="318.2" r="2.1" fill="#4ea23a" fill-opacity="0.88"/><circle cx="1314.9" cy="318.2" r="0.7" fill="#fff" fill-opacity="0.8"/><circle cx="1314.9" cy="322.3" r="2.1" fill="#a2d86e" fill-opacity="0.88"/><circle cx="1314.9" cy="322.3" r="0.7" fill="#fff" fill-opacity="0.8"/><circle cx="1314.9" cy="328.7" r="2.1" fill="#4682c4" fill-opacity="0.88"/><circle cx="1314.9" cy="328.7" r="0.7" fill="#fff" fill-opacity="0.8"/><circle cx="1322.6" cy="316.6" r="2.1" fill="#f7c545" fill-opacity="0.88"/><circle cx="1322.6" cy="316.6" r="0.7" fill="#fff" fill-opacity="0.8"/><circle cx="1322.6" cy="320.4" r="2.1" fill="#4ea23a" fill-opacity="0.88"/><circle cx="1322.6" cy="320.4" r="0.7" fill="#fff" fill-opacity="0.8"/><circle cx="1322.6" cy="325.5" r="2.1" fill="#a2d86e" fill-opacity="0.88"/><circle cx="1322.6" cy="325.5" r="0.7" fill="#fff" fill-opacity="0.8"/><circle cx="1322.6" cy="329.6" r="2.1" fill="#4682c4" fill-opacity="0.88"/><circle cx="1322.6" cy="329.6" r="0.7" fill="#fff" fill-opacity="0.8"/><rect x="1300.0" y="354.1" width="10.4" height="9.9" fill="#4ea23a"/><rect x="1311.8" y="354.1" width="10.3" height="5.9" fill="#a2d86e"/><rect x="1311.8" y="360.7" width="4.7" height="8.0" fill="#f7c545"/><rect x="1317.0" y="360.7" width="5.1" height="8.0" fill="#4682c4"/><rect x="1300.0" y="365.9" width="10.4" height="9.9" fill="#a2d86e"/><rect x="1311.8" y="369.9" width="6.3" height="5.9" fill="#e2492f"/><rect x="1319.3" y="369.9" width="2.8" height="5.9" fill="#f6cfa6"/><rect x="1304.7" y="397" width="5.3" height="3.2" fill="#a2d86e"/><rect x="1311.0" y="397" width="5.3" height="3.2" fill="#a2d86e"/><rect x="1317.4" y="397" width="5.3" height="3.2" fill="#a2d86e"/><rect x="1298.1" y="401.6" width="4.8" height="3.5" fill="#4682c4"/><rect x="1304.7" y="401.6" width="5.3" height="3.5" fill="#9c9c9c"/><rect x="1311.0" y="401.6" width="5.3" height="3.5" fill="#9c9c9c"/><rect x="1317.4" y="401.6" width="5.3" height="3.5" fill="#9c9c9c"/><rect x="1298.1" y="406.0" width="4.8" height="3.5" fill="#4682c4"/><rect x="1304.7" y="406.0" width="5.3" height="3.5" fill="#9c9c9c"/><rect x="1311.0" y="406.0" width="5.3" height="3.5" fill="#9c9c9c"/><rect x="1317.4" y="406.0" width="5.3" height="3.5" fill="#9c9c9c"/><rect x="1298.1" y="410.6" width="4.8" height="3.5" fill="#4682c4"/><rect x="1304.7" y="410.6" width="5.3" height="3.5" fill="#9c9c9c"/><rect x="1311.0" y="410.6" width="5.3" height="3.5" fill="#9c9c9c"/><rect x="1317.4" y="410.6" width="5.3" height="3.5" fill="#9c9c9c"/><rect x="1298.1" y="415.2" width="4.8" height="3.5" fill="#4682c4"/><rect x="1304.7" y="415.2" width="5.3" height="3.5" fill="#9c9c9c"/><rect x="1311.0" y="415.2" width="5.3" height="3.5" fill="#9c9c9c"/><rect x="1317.4" y="415.2" width="5.3" height="3.5" fill="#9c9c9c"/><circle cx="1302.1" cy="443.0" r="2.0" fill="#7ea9da"/><circle cx="1309.1" cy="443.0" r="0.8" fill="#7ea9da"/><circle cx="1316.3" cy="443.0" r="1.4" fill="#7ea9da"/><circle cx="1302.1" cy="450.0" r="0.8" fill="#7ea9da"/><circle cx="1309.1" cy="450.0" r="2.0" fill="#7ea9da"/><circle cx="1316.5" cy="450.0" r="2.5" fill="#7ea9da"/><circle cx="1302.1" cy="457.6" r="2.4" fill="#7ea9da"/><circle cx="1309.1" cy="457.6" r="1.2" fill="#7ea9da"/><circle cx="1316.3" cy="457.6" r="2.0" fill="#7ea9da"/><g fill="#b4b4b4"><path d="M1297.5 486.5L1303 485.5L1308.5 486L1307 489L1304.5 490.5L1303.5 493L1301.5 491L1299.5 488.5Z"/><path d="M1303.8 493.2L1306.6 494L1305.6 497.6L1304.2 499.6L1303.6 496Z"/><path d="M1310.5 486.5L1315 485.2L1323.5 485.8L1325 487.6L1322.5 489.6L1321 492.4L1318.6 490.6L1316.4 491.6L1314 489.4L1311.4 489.4Z"/><path d="M1311 490.6L1315 490.4L1316 493.6L1314.4 497.4L1312.8 494.4Z"/><path d="M1320.6 494.6L1323.6 494.2L1323.8 496.6L1321.2 496.8Z"/></g><circle cx="1300.6" cy="488.4" r="1" fill="#f7c545"/><circle cx="1313.0" cy="488.0" r="1" fill="#4682c4"/><circle cx="1319.6" cy="488.6" r="1" fill="#e2492f"/><circle cx="1304.8" cy="496.0" r="1" fill="#4ea23a"/><circle cx="1317.4" cy="490.0" r="1" fill="#f6a04a"/><path d="M1298.6 528.6L1303 527L1312 527.4L1318 528.2L1320.6 529.4L1322.6 528.2L1324.8 527L1324.4 530L1322.6 532.6L1321.6 535.6L1319.6 538.4L1320.4 542L1319.2 542.6L1317.6 539.4L1314.6 539L1312.4 540.6L1311.6 543L1309.6 541L1307.6 539.4L1303.6 538.8L1300.6 536.4L1298.8 532.6Z" fill="#a9c9ee"/><path d="M1308 536.8H1310.4V535.6H1313.2L1313.6 538.6L1312.2 540.4L1311.6 542.6L1310 540.8L1308.8 539.2L1307.2 538.6Z" fill="#4a86d0"/><path d="M1299.6 540.4L1301.4 539.8L1302 541.8L1300 542.2Z" fill="#a9c9ee"/></svg>
<div class="abs hline" style="left:-1px;top:552px;width:51px;background:#ececec"></div>

</div>
<div class="abs" id="bottom"></div>
<div class="abs" id="edgeT"></div>
<div class="abs" id="edgeL"></div>
<div class="abs" id="edgeR"></div>
</div>
</body>
</html>
